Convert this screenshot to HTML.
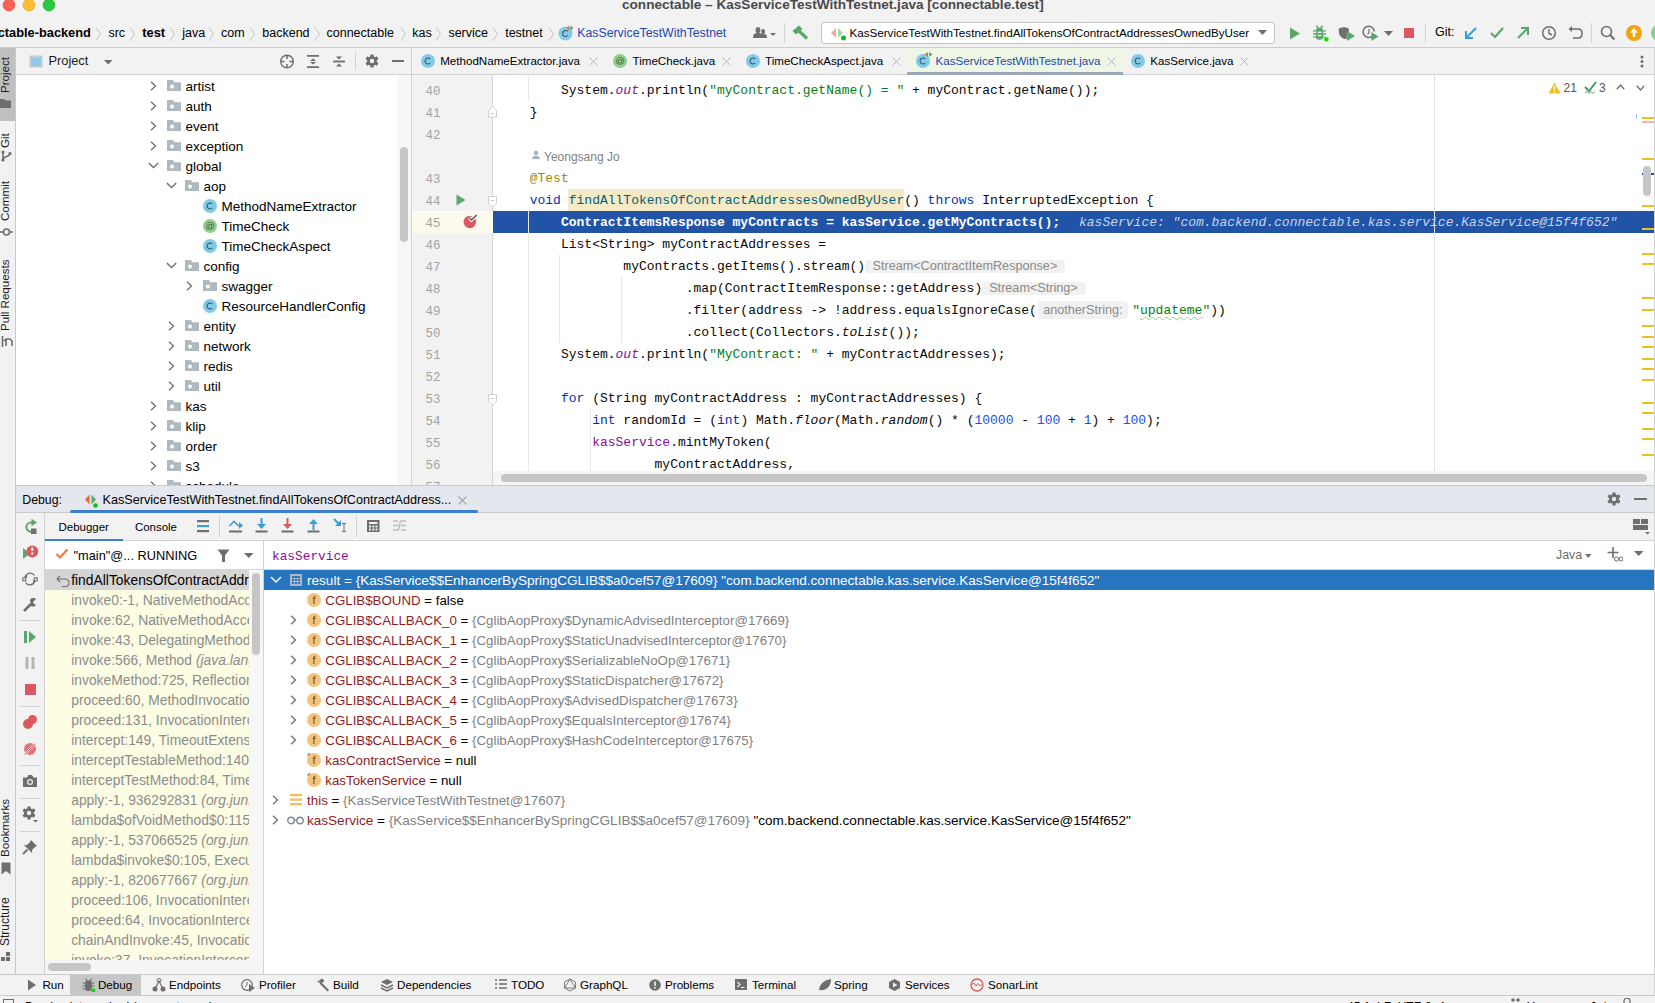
<!DOCTYPE html>
<html><head><meta charset="utf-8"><title>IDE</title><style>
html,body{margin:0;padding:0;}
body{width:1655px;height:1003px;overflow:hidden;position:relative;background:#f2f2f2;font-family:'Liberation Sans',sans-serif;}
.a{position:absolute;}
.t{white-space:pre;}
.hint{font-family:'Liberation Sans',sans-serif;font-size:11.5px;color:#8a8a8a;background:#ececec;border-radius:3px;padding:1px 3px 2px 3px;margin-left:6px;margin-right:3px;position:relative;top:-1px;}
</style></head><body>
<div class="a" style="left:0px;top:0px;width:1655px;height:47px;background:#f2f2f2;"></div>
<svg class="a" style="left:2px;top:-2px;" width="14" height="14" viewBox="0 0 14 14"><circle cx="7" cy="7" r="6" fill="#fe5f57" stroke="#e0443e" stroke-width="0.6"/></svg>
<svg class="a" style="left:22px;top:-2px;" width="14" height="14" viewBox="0 0 14 14"><circle cx="7" cy="7" r="6" fill="#febc2e" stroke="#dea123" stroke-width="0.6"/></svg>
<svg class="a" style="left:42px;top:-2px;" width="14" height="14" viewBox="0 0 14 14"><circle cx="7" cy="7" r="6" fill="#28c840" stroke="#1aab29" stroke-width="0.6"/></svg>
<div class="a t" style="left:622px;top:-2.06px;font-family:'Liberation Sans',sans-serif;font-size:13.6px;line-height:13.6px;color:#4a4a4a;font-weight:bold;">connectable – KasServiceTestWithTestnet.java [connectable.test]</div>
<div class="a t" style="left:-2.3px;top:27.02px;font-family:'Liberation Sans',sans-serif;font-size:12.8px;line-height:12.8px;color:#000;font-weight:bold;">ctable-backend</div>
<div class="a t" style="left:108.4px;top:27.27px;font-family:'Liberation Sans',sans-serif;font-size:12.5px;line-height:12.5px;color:#000;">src</div>
<div class="a t" style="left:142.3px;top:27.02px;font-family:'Liberation Sans',sans-serif;font-size:12.8px;line-height:12.8px;color:#000;font-weight:bold;">test</div>
<div class="a t" style="left:182.2px;top:27.27px;font-family:'Liberation Sans',sans-serif;font-size:12.5px;line-height:12.5px;color:#000;">java</div>
<div class="a t" style="left:221px;top:27.27px;font-family:'Liberation Sans',sans-serif;font-size:12.5px;line-height:12.5px;color:#000;">com</div>
<div class="a t" style="left:262.3px;top:27.27px;font-family:'Liberation Sans',sans-serif;font-size:12.5px;line-height:12.5px;color:#000;">backend</div>
<div class="a t" style="left:326.5px;top:27.27px;font-family:'Liberation Sans',sans-serif;font-size:12.5px;line-height:12.5px;color:#000;">connectable</div>
<div class="a t" style="left:412.2px;top:27.27px;font-family:'Liberation Sans',sans-serif;font-size:12.5px;line-height:12.5px;color:#000;">kas</div>
<div class="a t" style="left:448.4px;top:27.27px;font-family:'Liberation Sans',sans-serif;font-size:12.5px;line-height:12.5px;color:#000;">service</div>
<div class="a t" style="left:505.2px;top:27.27px;font-family:'Liberation Sans',sans-serif;font-size:12.5px;line-height:12.5px;color:#000;">testnet</div>
<svg class="a" style="left:94.6px;top:27px;" width="7" height="14" viewBox="0 0 7 14"><path d="M1 0.5 L5.5 7 L1 13.5" fill="none" stroke="#c4c4c4" stroke-width="1"/></svg>
<svg class="a" style="left:128.7px;top:27px;" width="7" height="14" viewBox="0 0 7 14"><path d="M1 0.5 L5.5 7 L1 13.5" fill="none" stroke="#c4c4c4" stroke-width="1"/></svg>
<svg class="a" style="left:169px;top:27px;" width="7" height="14" viewBox="0 0 7 14"><path d="M1 0.5 L5.5 7 L1 13.5" fill="none" stroke="#c4c4c4" stroke-width="1"/></svg>
<svg class="a" style="left:208px;top:27px;" width="7" height="14" viewBox="0 0 7 14"><path d="M1 0.5 L5.5 7 L1 13.5" fill="none" stroke="#c4c4c4" stroke-width="1"/></svg>
<svg class="a" style="left:248.7px;top:27px;" width="7" height="14" viewBox="0 0 7 14"><path d="M1 0.5 L5.5 7 L1 13.5" fill="none" stroke="#c4c4c4" stroke-width="1"/></svg>
<svg class="a" style="left:313.5px;top:27px;" width="7" height="14" viewBox="0 0 7 14"><path d="M1 0.5 L5.5 7 L1 13.5" fill="none" stroke="#c4c4c4" stroke-width="1"/></svg>
<svg class="a" style="left:399.5px;top:27px;" width="7" height="14" viewBox="0 0 7 14"><path d="M1 0.5 L5.5 7 L1 13.5" fill="none" stroke="#c4c4c4" stroke-width="1"/></svg>
<svg class="a" style="left:434.7px;top:27px;" width="7" height="14" viewBox="0 0 7 14"><path d="M1 0.5 L5.5 7 L1 13.5" fill="none" stroke="#c4c4c4" stroke-width="1"/></svg>
<svg class="a" style="left:492.4px;top:27px;" width="7" height="14" viewBox="0 0 7 14"><path d="M1 0.5 L5.5 7 L1 13.5" fill="none" stroke="#c4c4c4" stroke-width="1"/></svg>
<svg class="a" style="left:548px;top:27px;" width="7" height="14" viewBox="0 0 7 14"><path d="M1 0.5 L5.5 7 L1 13.5" fill="none" stroke="#c4c4c4" stroke-width="1"/></svg>
<svg class="a" style="left:558px;top:25px;" width="16" height="16" viewBox="0 0 16 16"><circle cx="7.5" cy="8.5" r="7" fill="#82cbe8"/><path d="M9.8 6.5 A3 3 0 1 0 9.8 10.5" fill="none" stroke="#36556a" stroke-width="1.1"/><path d="M11.5 0.5 L8.5 3 L11.5 5.5 Z" fill="#ed6a2c"/><path d="M12.5 0.5 L15.5 3 L12.5 5.5 Z" fill="#59a869"/></svg>
<div class="a t" style="left:577.3px;top:26.55px;font-family:'Liberation Sans',sans-serif;font-size:12.3px;line-height:12.3px;color:#1d47ae;">KasServiceTestWithTestnet</div>
<svg class="a" style="left:750px;top:25px;" width="28" height="16" viewBox="0 0 28 16"><path d="M3 13 C3 9 5 8 7 8 C5 7 5 2 8 2 C11 2 11 7 9 8 C11 8 13 9 13 13 Z" fill="#6e6e6e"/><path d="M9 13 C9 10 10 9 12 9 C11 8 10.5 4 13 4 C15.5 4 15.5 8 14 9 C16 9 17 10 17 13 Z" fill="#6e6e6e"/><path d="M20 8 L26 8 L23 11 Z" fill="#6e6e6e"/></svg>
<div class="a" style="left:784px;top:23px;width:1px;height:20px;background:#d1d1d1;"></div>
<svg class="a" style="left:792px;top:25px;" width="17" height="15" viewBox="0 0 17 15"><path d="M0.5 6 L7 0.5 L10.5 4 L4 9.5 Z" fill="#59a869"/><path d="M6.5 5.5 L15 13.5" stroke="#59a869" stroke-width="3.2"/></svg>
<div class="a" style="left:821px;top:22px;width:454px;height:22px;background:#fff;border:1px solid #c4c4c4;border-radius:3px;box-sizing:border-box;"></div>
<svg class="a" style="left:830px;top:26px;" width="18" height="16" viewBox="0 0 18 16"><path d="M6 2 L1 7 L6 12 Z" fill="#f4a7a0"/><path d="M8 2 L13 7 L8 12 Z" fill="#a8d6a8"/><circle cx="13.5" cy="12" r="2.5" fill="#20b020"/></svg>
<div class="a t" style="left:849.4px;top:27.09px;font-family:'Liberation Sans',sans-serif;font-size:11.66px;line-height:11.66px;color:#000;">KasServiceTestWithTestnet.findAllTokensOfContractAddressesOwnedByUser</div>
<svg class="a" style="left:1258px;top:30px;" width="10" height="6" viewBox="0 0 10 6"><path d="M0 0 L9 0 L4.5 5 Z" fill="#6e6e6e"/></svg>
<svg class="a" style="left:1289px;top:27px;" width="12" height="13" viewBox="0 0 12 13"><path d="M1 0.5 L11 6.5 L1 12.5 Z" fill="#59a869"/></svg>
<svg class="a" style="left:1312px;top:25px;" width="18" height="17" viewBox="0 0 18 17"><path d="M4.5 0.8 L6.2 3.2 M10.5 0.8 L8.8 3.2" stroke="#59a869" stroke-width="1.5"/><rect x="3.8" y="2.8" width="7.4" height="12" rx="3.3" fill="#59a869"/><rect x="5.6" y="6.6" width="3.8" height="1.4" fill="#f2f2f2"/><rect x="5.6" y="9.8" width="3.8" height="1.4" fill="#f2f2f2"/><path d="M1 5.8 L3.8 5.8 M1 9 L3.8 9 M1 12.2 L3.8 12.2 M11.2 5.8 L14 5.8 M11.2 9 L14 9 M11.2 12.2 L14 12.2" stroke="#59a869" stroke-width="1.3"/><circle cx="14.4" cy="14.3" r="2.5" fill="#00dd00" stroke="#f2f2f2" stroke-width="0.6"/></svg>
<svg class="a" style="left:1338px;top:25px;" width="18" height="17" viewBox="0 0 18 17"><path d="M0.8 3.5 C3 2.5 5 2 7 2.2 C8.5 2.3 9.8 2.8 10.8 3.5 L10.8 7 L8.8 8.5 L8.8 13 C8.2 13.5 7.5 14 6.8 14.2 C3.5 13 1 10.5 0.8 7 Z" fill="#6e6e6e"/><path d="M8.8 6 L17 11 L8.8 16 Z" fill="#59a869"/></svg>
<svg class="a" style="left:1362px;top:25px;" width="18" height="17" viewBox="0 0 18 17"><path d="M10.5 11 A5.6 5.6 0 1 1 12.3 6.5" fill="none" stroke="#6e6e6e" stroke-width="1.5"/><path d="M7 3.8 L7 7.5 L5.5 9.5" stroke="#6e6e6e" stroke-width="1.2" fill="none"/><path d="M9.3 7 L16.5 11.5 L9.3 16 Z" fill="#59a869"/></svg>
<svg class="a" style="left:1384px;top:31px;" width="10" height="6" viewBox="0 0 10 6"><path d="M0 0 L9 0 L4.5 5 Z" fill="#6e6e6e"/></svg>
<div class="a" style="left:1404px;top:28px;width:10px;height:10px;background:#db5860;"></div>
<div class="a" style="left:1425px;top:23px;width:1px;height:20px;background:#d1d1d1;"></div>
<div class="a t" style="left:1435px;top:26.38px;font-family:'Liberation Sans',sans-serif;font-size:12.5px;line-height:12.5px;color:#000;">Git:</div>
<svg class="a" style="left:1463px;top:25px;" width="16" height="16" viewBox="0 0 16 16"><path d="M13 3 L4 12 M3 6 L3 13 L10 13" stroke="#389fd6" stroke-width="2" fill="none"/></svg>
<svg class="a" style="left:1489px;top:25px;" width="16" height="16" viewBox="0 0 16 16"><path d="M2 8 L6 12 L14 3" stroke="#59a869" stroke-width="2.2" fill="none"/></svg>
<svg class="a" style="left:1515px;top:25px;" width="16" height="16" viewBox="0 0 16 16"><path d="M3 13 L12 4 M6 3 L13 3 L13 10" stroke="#59a869" stroke-width="2" fill="none"/></svg>
<svg class="a" style="left:1541px;top:25px;" width="16" height="16" viewBox="0 0 16 16"><circle cx="8" cy="8" r="6.3" fill="none" stroke="#6e6e6e" stroke-width="1.5"/><path d="M8 4 L8 8.5 L11 10" stroke="#6e6e6e" stroke-width="1.4" fill="none"/></svg>
<svg class="a" style="left:1567px;top:25px;" width="16" height="16" viewBox="0 0 16 16"><path d="M4 4 L11 4 C14 4 15 6 15 8.5 C15 11 13.5 13 11 13 L6 13" stroke="#6e6e6e" stroke-width="1.5" fill="none"/><path d="M1.5 4 L5 1 L5 7 Z" fill="#6e6e6e"/></svg>
<div class="a" style="left:1591px;top:23px;width:1px;height:20px;background:#d1d1d1;"></div>
<svg class="a" style="left:1600px;top:25px;" width="16" height="16" viewBox="0 0 16 16"><circle cx="6.5" cy="6.5" r="5" fill="none" stroke="#6e6e6e" stroke-width="1.6"/><path d="M10 10 L14.5 14.5" stroke="#6e6e6e" stroke-width="2"/></svg>
<svg class="a" style="left:1625px;top:24px;" width="18" height="18" viewBox="0 0 18 18"><circle cx="9" cy="9" r="8" fill="#f0a30a"/><path d="M9 4 L13 8.5 L10.3 8.5 L10.3 13 L7.7 13 L7.7 8.5 L5 8.5 Z" fill="#fff"/></svg>
<svg class="a" style="left:1650px;top:24px;" width="10" height="18" viewBox="0 0 10 18"><circle cx="9" cy="9" r="8" fill="#7ed38f"/></svg>
<div class="a" style="left:0px;top:47px;width:1655px;height:1px;background:#cdcdcd;"></div>
<div class="a" style="left:0px;top:48px;width:15px;height:955px;background:#f2f2f2;"></div>
<div class="a" style="left:0px;top:48px;width:15px;height:73px;background:#c0c0c0;"></div>
<div class="a" style="left:15px;top:48px;width:1px;height:926px;background:#c9c9c9;"></div>
<div class="a t" style="left:-1.0px;top:93px;font-family:'Liberation Sans';font-size:11.6px;line-height:11.6px;color:#1c1c1c;transform-origin:0 0;transform:rotate(-90deg);">Project</div>
<svg class="a" style="left:0px;top:99px;" width="12" height="10" viewBox="0 0 12 10"><path d="M0 0 L4 0 L5.5 1.5 L11 1.5 L11 9 L0 9 Z" fill="#6e6e6e"/></svg>
<div class="a t" style="left:-1.0px;top:148px;font-family:'Liberation Sans';font-size:11.6px;line-height:11.6px;color:#1c1c1c;transform-origin:0 0;transform:rotate(-90deg);">Git</div>
<svg class="a" style="left:1px;top:150px;" width="11" height="12" viewBox="0 0 11 12"><circle cx="2" cy="2" r="1.6" fill="#6e6e6e"/><circle cx="9" cy="3.5" r="1.6" fill="#6e6e6e"/><circle cx="2" cy="10" r="1.6" fill="#6e6e6e"/><path d="M2 2 L2 10 M9 3.5 C9 7 3 6 2 9" stroke="#6e6e6e" stroke-width="1.5" fill="none"/></svg>
<div class="a t" style="left:-1.0px;top:221px;font-family:'Liberation Sans';font-size:11.6px;line-height:11.6px;color:#1c1c1c;transform-origin:0 0;transform:rotate(-90deg);">Commit</div>
<svg class="a" style="left:0px;top:227px;" width="13" height="10" viewBox="0 0 13 10"><circle cx="6.5" cy="5" r="3" fill="none" stroke="#6e6e6e" stroke-width="1.6"/><path d="M0 5 L3.5 5 M9.5 5 L13 5" stroke="#6e6e6e" stroke-width="1.6"/></svg>
<div class="a t" style="left:-1.0px;top:330.5px;font-family:'Liberation Sans';font-size:11.6px;line-height:11.6px;color:#1c1c1c;transform-origin:0 0;transform:rotate(-90deg);">Pull Requests</div>
<svg class="a" style="left:1px;top:336px;" width="12" height="11" viewBox="0 0 12 11"><path d="M1.5 0 L1.5 11 M5 10 L5 3 M5 3 L3 5 M5 3 L9 3 L11 5 L11 10" stroke="#6e6e6e" stroke-width="1.6" fill="none"/></svg>
<div class="a t" style="left:-1.0px;top:857px;font-family:'Liberation Sans';font-size:11.6px;line-height:11.6px;color:#1c1c1c;transform-origin:0 0;transform:rotate(-90deg);">Bookmarks</div>
<svg class="a" style="left:1px;top:862px;" width="10" height="13" viewBox="0 0 10 13"><path d="M0.5 0.5 L9.5 0.5 L9.5 12.5 L5 9 L0.5 12.5 Z" fill="#6e6e6e"/></svg>
<div class="a t" style="left:-1.0px;top:945.5px;font-family:'Liberation Sans';font-size:12px;line-height:12px;color:#1c1c1c;transform-origin:0 0;transform:rotate(-90deg);">Structure</div>
<svg class="a" style="left:1px;top:952px;" width="10" height="10" viewBox="0 0 10 10"><rect x="5" y="0" width="4" height="4" fill="#6e6e6e"/><rect x="0" y="5" width="4" height="4" fill="#6e6e6e"/><rect x="5" y="5" width="4" height="4" fill="#6e6e6e"/></svg>
<div class="a" style="left:16px;top:48px;width:395px;height:26px;background:#f2f2f2;"></div>
<div class="a" style="left:16px;top:74px;width:395px;height:1px;background:#d1d1d1;"></div>
<div class="a" style="left:16px;top:75px;width:395px;height:410px;background:#ffffff;"></div>
<div class="a" style="left:397px;top:75px;width:14px;height:410px;background:#f7f7f7;"></div>
<div class="a" style="left:411px;top:48px;width:1px;height:438px;background:#d1d1d1;"></div>
<svg class="a" style="left:29px;top:55px;" width="14" height="13" viewBox="0 0 14 13"><rect x="0.5" y="0.5" width="13" height="12" fill="#9aa7b0" opacity="0.5"/><rect x="2" y="3" width="10" height="8" fill="#8ecbe8"/></svg>
<div class="a t" style="left:48.5px;top:55.12px;font-family:'Liberation Sans',sans-serif;font-size:12.8px;line-height:12.8px;color:#1a1a1a;">Project</div>
<svg class="a" style="left:104px;top:60px;" width="9" height="5" viewBox="0 0 9 5"><path d="M0 0 L8.5 0 L4.25 4.5 Z" fill="#6e6e6e"/></svg>
<svg class="a" style="left:280px;top:54px;" width="15" height="15" viewBox="0 0 15 15"><circle cx="7" cy="7.5" r="6.3" fill="none" stroke="#6e6e6e" stroke-width="1.4"/><path d="M7 1.5 L7 5 M7 10 L7 13.5 M1 7.5 L4.5 7.5 M9.5 7.5 L13 7.5" stroke="#6e6e6e" stroke-width="1.5"/></svg>
<svg class="a" style="left:306px;top:54px;" width="14" height="15" viewBox="0 0 14 15"><path d="M1 1.8 L13 1.8 M1 13.2 L13 13.2" stroke="#6e6e6e" stroke-width="1.8"/><path d="M7 4.5 L10 7 L4 7 Z M7 10.5 L10 8 L4 8 Z" fill="#6e6e6e"/></svg>
<svg class="a" style="left:332px;top:54px;" width="14" height="15" viewBox="0 0 14 15"><path d="M1 7.5 L13 7.5" stroke="#6e6e6e" stroke-width="1.8"/><path d="M7 5.5 L10 2.5 L4 2.5 Z M7 9.5 L10 12.5 L4 12.5 Z" fill="#6e6e6e"/></svg>
<div class="a" style="left:355px;top:52px;width:1px;height:18px;background:#d1d1d1;"></div>
<svg class="a" style="left:365px;top:54px;" width="14" height="14" viewBox="0 0 14 14"><path d="M5.43 2.25 L5.41 0.39 L8.59 0.39 L8.57 2.25 L10.33 3.27 L11.93 2.32 L13.52 5.07 L11.90 5.99 L11.90 8.01 L13.52 8.93 L11.93 11.68 L10.33 10.73 L8.57 11.75 L8.59 13.61 L5.41 13.61 L5.43 11.75 L3.67 10.73 L2.07 11.68 L0.48 8.93 L2.10 8.01 L2.10 5.99 L0.48 5.07 L2.07 2.32 L3.67 3.27 Z" fill="#6e6e6e"/><circle cx="7" cy="7" r="2.2" fill="#f2f2f2"/></svg>
<div class="a" style="left:392px;top:60px;width:12px;height:2px;background:#6e6e6e;"></div>
<div class="a" style="left:16px;top:75px;width:381px;height:410px;overflow:hidden">
<svg class="a" style="left:134px;top:6px;" width="7" height="10" viewBox="0 0 7 10"><path d="M1 0.8 L5.5 5 L1 9.2" fill="none" stroke="#6e6e6e" stroke-width="1.3"/></svg>
<svg class="a" style="left:151px;top:4px;" width="14" height="13" viewBox="0 0 14 13"><path d="M0 1 L6.2 1 L7.2 3.2 L14 3.2 L14 12 L0 12 Z" fill="#aeb9c0"/><circle cx="5" cy="7.4" r="2" fill="#fff"/></svg>
<div class="a t" style="left:169.5px;top:5.03px;font-family:'Liberation Sans',sans-serif;font-size:13.5px;line-height:13.5px;color:#000;">artist</div>
<svg class="a" style="left:134px;top:26px;" width="7" height="10" viewBox="0 0 7 10"><path d="M1 0.8 L5.5 5 L1 9.2" fill="none" stroke="#6e6e6e" stroke-width="1.3"/></svg>
<svg class="a" style="left:151px;top:24px;" width="14" height="13" viewBox="0 0 14 13"><path d="M0 1 L6.2 1 L7.2 3.2 L14 3.2 L14 12 L0 12 Z" fill="#aeb9c0"/><circle cx="5" cy="7.4" r="2" fill="#fff"/></svg>
<div class="a t" style="left:169.5px;top:25.02px;font-family:'Liberation Sans',sans-serif;font-size:13.5px;line-height:13.5px;color:#000;">auth</div>
<svg class="a" style="left:134px;top:46px;" width="7" height="10" viewBox="0 0 7 10"><path d="M1 0.8 L5.5 5 L1 9.2" fill="none" stroke="#6e6e6e" stroke-width="1.3"/></svg>
<svg class="a" style="left:151px;top:44px;" width="14" height="13" viewBox="0 0 14 13"><path d="M0 1 L6.2 1 L7.2 3.2 L14 3.2 L14 12 L0 12 Z" fill="#aeb9c0"/><circle cx="5" cy="7.4" r="2" fill="#fff"/></svg>
<div class="a t" style="left:169.5px;top:45.02px;font-family:'Liberation Sans',sans-serif;font-size:13.5px;line-height:13.5px;color:#000;">event</div>
<svg class="a" style="left:134px;top:66px;" width="7" height="10" viewBox="0 0 7 10"><path d="M1 0.8 L5.5 5 L1 9.2" fill="none" stroke="#6e6e6e" stroke-width="1.3"/></svg>
<svg class="a" style="left:151px;top:64px;" width="14" height="13" viewBox="0 0 14 13"><path d="M0 1 L6.2 1 L7.2 3.2 L14 3.2 L14 12 L0 12 Z" fill="#aeb9c0"/><circle cx="5" cy="7.4" r="2" fill="#fff"/></svg>
<div class="a t" style="left:169.5px;top:65.03px;font-family:'Liberation Sans',sans-serif;font-size:13.5px;line-height:13.5px;color:#000;">exception</div>
<svg class="a" style="left:132px;top:87px;" width="11" height="7" viewBox="0 0 11 7"><path d="M0.8 1 L5.5 5.5 L10.2 1" fill="none" stroke="#6e6e6e" stroke-width="1.3"/></svg>
<svg class="a" style="left:151px;top:84px;" width="14" height="13" viewBox="0 0 14 13"><path d="M0 1 L6.2 1 L7.2 3.2 L14 3.2 L14 12 L0 12 Z" fill="#aeb9c0"/><circle cx="5" cy="7.4" r="2" fill="#fff"/></svg>
<div class="a t" style="left:169.5px;top:85.03px;font-family:'Liberation Sans',sans-serif;font-size:13.5px;line-height:13.5px;color:#000;">global</div>
<svg class="a" style="left:150px;top:107px;" width="11" height="7" viewBox="0 0 11 7"><path d="M0.8 1 L5.5 5.5 L10.2 1" fill="none" stroke="#6e6e6e" stroke-width="1.3"/></svg>
<svg class="a" style="left:169px;top:104px;" width="14" height="13" viewBox="0 0 14 13"><path d="M0 1 L6.2 1 L7.2 3.2 L14 3.2 L14 12 L0 12 Z" fill="#aeb9c0"/><circle cx="5" cy="7.4" r="2" fill="#fff"/></svg>
<div class="a t" style="left:187.5px;top:105.03px;font-family:'Liberation Sans',sans-serif;font-size:13.5px;line-height:13.5px;color:#000;">aop</div>
<svg class="a" style="left:187px;top:124px;" width="14" height="14" viewBox="0 0 14 14"><circle cx="7" cy="7" r="7" fill="#82cbe8"/><path d="M9.3 5 A3 3 0 1 0 9.3 9" fill="none" stroke="#36556a" stroke-width="1.1"/></svg>
<div class="a t" style="left:205.5px;top:125.03px;font-family:'Liberation Sans',sans-serif;font-size:13.5px;line-height:13.5px;color:#000;">MethodNameExtractor</div>
<svg class="a" style="left:187px;top:144px;" width="14" height="14" viewBox="0 0 14 14"><circle cx="7" cy="7" r="7" fill="#8fcf8c"/><text x="7" y="10.3" font-family="Liberation Sans" font-size="9" fill="#3b5c3a" text-anchor="middle">@</text></svg>
<div class="a t" style="left:205.5px;top:145.03px;font-family:'Liberation Sans',sans-serif;font-size:13.5px;line-height:13.5px;color:#000;">TimeCheck</div>
<svg class="a" style="left:187px;top:164px;" width="14" height="14" viewBox="0 0 14 14"><circle cx="7" cy="7" r="7" fill="#82cbe8"/><path d="M9.3 5 A3 3 0 1 0 9.3 9" fill="none" stroke="#36556a" stroke-width="1.1"/></svg>
<div class="a t" style="left:205.5px;top:165.03px;font-family:'Liberation Sans',sans-serif;font-size:13.5px;line-height:13.5px;color:#000;">TimeCheckAspect</div>
<svg class="a" style="left:150px;top:187px;" width="11" height="7" viewBox="0 0 11 7"><path d="M0.8 1 L5.5 5.5 L10.2 1" fill="none" stroke="#6e6e6e" stroke-width="1.3"/></svg>
<svg class="a" style="left:169px;top:184px;" width="14" height="13" viewBox="0 0 14 13"><path d="M0 1 L6.2 1 L7.2 3.2 L14 3.2 L14 12 L0 12 Z" fill="#aeb9c0"/><circle cx="5" cy="7.4" r="2" fill="#fff"/></svg>
<div class="a t" style="left:187.5px;top:185.03px;font-family:'Liberation Sans',sans-serif;font-size:13.5px;line-height:13.5px;color:#000;">config</div>
<svg class="a" style="left:170px;top:206px;" width="7" height="10" viewBox="0 0 7 10"><path d="M1 0.8 L5.5 5 L1 9.2" fill="none" stroke="#6e6e6e" stroke-width="1.3"/></svg>
<svg class="a" style="left:187px;top:204px;" width="14" height="13" viewBox="0 0 14 13"><path d="M0 1 L6.2 1 L7.2 3.2 L14 3.2 L14 12 L0 12 Z" fill="#aeb9c0"/><circle cx="5" cy="7.4" r="2" fill="#fff"/></svg>
<div class="a t" style="left:205.5px;top:205.03px;font-family:'Liberation Sans',sans-serif;font-size:13.5px;line-height:13.5px;color:#000;">swagger</div>
<svg class="a" style="left:187px;top:224px;" width="14" height="14" viewBox="0 0 14 14"><circle cx="7" cy="7" r="7" fill="#82cbe8"/><path d="M9.3 5 A3 3 0 1 0 9.3 9" fill="none" stroke="#36556a" stroke-width="1.1"/></svg>
<div class="a t" style="left:205.5px;top:225.03px;font-family:'Liberation Sans',sans-serif;font-size:13.5px;line-height:13.5px;color:#000;">ResourceHandlerConfig</div>
<svg class="a" style="left:152px;top:246px;" width="7" height="10" viewBox="0 0 7 10"><path d="M1 0.8 L5.5 5 L1 9.2" fill="none" stroke="#6e6e6e" stroke-width="1.3"/></svg>
<svg class="a" style="left:169px;top:244px;" width="14" height="13" viewBox="0 0 14 13"><path d="M0 1 L6.2 1 L7.2 3.2 L14 3.2 L14 12 L0 12 Z" fill="#aeb9c0"/><circle cx="5" cy="7.4" r="2" fill="#fff"/></svg>
<div class="a t" style="left:187.5px;top:245.03px;font-family:'Liberation Sans',sans-serif;font-size:13.5px;line-height:13.5px;color:#000;">entity</div>
<svg class="a" style="left:152px;top:266px;" width="7" height="10" viewBox="0 0 7 10"><path d="M1 0.8 L5.5 5 L1 9.2" fill="none" stroke="#6e6e6e" stroke-width="1.3"/></svg>
<svg class="a" style="left:169px;top:264px;" width="14" height="13" viewBox="0 0 14 13"><path d="M0 1 L6.2 1 L7.2 3.2 L14 3.2 L14 12 L0 12 Z" fill="#aeb9c0"/><circle cx="5" cy="7.4" r="2" fill="#fff"/></svg>
<div class="a t" style="left:187.5px;top:265.02px;font-family:'Liberation Sans',sans-serif;font-size:13.5px;line-height:13.5px;color:#000;">network</div>
<svg class="a" style="left:152px;top:286px;" width="7" height="10" viewBox="0 0 7 10"><path d="M1 0.8 L5.5 5 L1 9.2" fill="none" stroke="#6e6e6e" stroke-width="1.3"/></svg>
<svg class="a" style="left:169px;top:284px;" width="14" height="13" viewBox="0 0 14 13"><path d="M0 1 L6.2 1 L7.2 3.2 L14 3.2 L14 12 L0 12 Z" fill="#aeb9c0"/><circle cx="5" cy="7.4" r="2" fill="#fff"/></svg>
<div class="a t" style="left:187.5px;top:285.02px;font-family:'Liberation Sans',sans-serif;font-size:13.5px;line-height:13.5px;color:#000;">redis</div>
<svg class="a" style="left:152px;top:306px;" width="7" height="10" viewBox="0 0 7 10"><path d="M1 0.8 L5.5 5 L1 9.2" fill="none" stroke="#6e6e6e" stroke-width="1.3"/></svg>
<svg class="a" style="left:169px;top:304px;" width="14" height="13" viewBox="0 0 14 13"><path d="M0 1 L6.2 1 L7.2 3.2 L14 3.2 L14 12 L0 12 Z" fill="#aeb9c0"/><circle cx="5" cy="7.4" r="2" fill="#fff"/></svg>
<div class="a t" style="left:187.5px;top:305.02px;font-family:'Liberation Sans',sans-serif;font-size:13.5px;line-height:13.5px;color:#000;">util</div>
<svg class="a" style="left:134px;top:326px;" width="7" height="10" viewBox="0 0 7 10"><path d="M1 0.8 L5.5 5 L1 9.2" fill="none" stroke="#6e6e6e" stroke-width="1.3"/></svg>
<svg class="a" style="left:151px;top:324px;" width="14" height="13" viewBox="0 0 14 13"><path d="M0 1 L6.2 1 L7.2 3.2 L14 3.2 L14 12 L0 12 Z" fill="#aeb9c0"/><circle cx="5" cy="7.4" r="2" fill="#fff"/></svg>
<div class="a t" style="left:169.5px;top:325.02px;font-family:'Liberation Sans',sans-serif;font-size:13.5px;line-height:13.5px;color:#000;">kas</div>
<svg class="a" style="left:134px;top:346px;" width="7" height="10" viewBox="0 0 7 10"><path d="M1 0.8 L5.5 5 L1 9.2" fill="none" stroke="#6e6e6e" stroke-width="1.3"/></svg>
<svg class="a" style="left:151px;top:344px;" width="14" height="13" viewBox="0 0 14 13"><path d="M0 1 L6.2 1 L7.2 3.2 L14 3.2 L14 12 L0 12 Z" fill="#aeb9c0"/><circle cx="5" cy="7.4" r="2" fill="#fff"/></svg>
<div class="a t" style="left:169.5px;top:345.02px;font-family:'Liberation Sans',sans-serif;font-size:13.5px;line-height:13.5px;color:#000;">klip</div>
<svg class="a" style="left:134px;top:366px;" width="7" height="10" viewBox="0 0 7 10"><path d="M1 0.8 L5.5 5 L1 9.2" fill="none" stroke="#6e6e6e" stroke-width="1.3"/></svg>
<svg class="a" style="left:151px;top:364px;" width="14" height="13" viewBox="0 0 14 13"><path d="M0 1 L6.2 1 L7.2 3.2 L14 3.2 L14 12 L0 12 Z" fill="#aeb9c0"/><circle cx="5" cy="7.4" r="2" fill="#fff"/></svg>
<div class="a t" style="left:169.5px;top:365.02px;font-family:'Liberation Sans',sans-serif;font-size:13.5px;line-height:13.5px;color:#000;">order</div>
<svg class="a" style="left:134px;top:386px;" width="7" height="10" viewBox="0 0 7 10"><path d="M1 0.8 L5.5 5 L1 9.2" fill="none" stroke="#6e6e6e" stroke-width="1.3"/></svg>
<svg class="a" style="left:151px;top:384px;" width="14" height="13" viewBox="0 0 14 13"><path d="M0 1 L6.2 1 L7.2 3.2 L14 3.2 L14 12 L0 12 Z" fill="#aeb9c0"/><circle cx="5" cy="7.4" r="2" fill="#fff"/></svg>
<div class="a t" style="left:169.5px;top:385.02px;font-family:'Liberation Sans',sans-serif;font-size:13.5px;line-height:13.5px;color:#000;">s3</div>
<svg class="a" style="left:134px;top:406px;" width="7" height="10" viewBox="0 0 7 10"><path d="M1 0.8 L5.5 5 L1 9.2" fill="none" stroke="#6e6e6e" stroke-width="1.3"/></svg>
<svg class="a" style="left:151px;top:404px;" width="14" height="13" viewBox="0 0 14 13"><path d="M0 1 L6.2 1 L7.2 3.2 L14 3.2 L14 12 L0 12 Z" fill="#aeb9c0"/><circle cx="5" cy="7.4" r="2" fill="#fff"/></svg>
<div class="a t" style="left:169.5px;top:405.02px;font-family:'Liberation Sans',sans-serif;font-size:13.5px;line-height:13.5px;color:#000;">schedule</div>
</div>
<div class="a" style="left:400px;top:147px;width:8px;height:95px;background:#c6c6c6;border-radius:4px;"></div>
<div class="a" style="left:412px;top:48px;width:1243px;height:26px;background:#f2f2f2;"></div>
<div class="a" style="left:412px;top:74px;width:1243px;height:1px;background:#d1d1d1;"></div>
<div class="a" style="left:907px;top:48px;width:216px;height:26px;background:#eef7e6;"></div>
<div class="a" style="left:907px;top:72px;width:216px;height:3px;background:#9aa7b9;"></div>
<svg class="a" style="left:421px;top:54px;" width="14" height="14" viewBox="0 0 14 14"><circle cx="7" cy="7" r="7" fill="#82cbe8"/><path d="M9.3 5 A3 3 0 1 0 9.3 9" fill="none" stroke="#36556a" stroke-width="1.1"/></svg>
<div class="a t" style="left:440.2px;top:54.94px;font-family:'Liberation Sans',sans-serif;font-size:11.6px;line-height:11.6px;color:#000;">MethodNameExtractor.java</div>
<svg class="a" style="left:589px;top:57px;" width="9" height="9" viewBox="0 0 9 9"><path d="M0.5 0.5 L8.5 8.5 M8.5 0.5 L0.5 8.5" stroke="#b4b4b4" stroke-width="1"/></svg>
<svg class="a" style="left:613.2px;top:54px;" width="14" height="14" viewBox="0 0 14 14"><circle cx="7" cy="7" r="7" fill="#8fcf8c"/><text x="7" y="10.3" font-family="Liberation Sans" font-size="9" fill="#3b5c3a" text-anchor="middle">@</text></svg>
<div class="a t" style="left:632.5px;top:54.94px;font-family:'Liberation Sans',sans-serif;font-size:11.6px;line-height:11.6px;color:#000;">TimeCheck.java</div>
<svg class="a" style="left:722px;top:57px;" width="9" height="9" viewBox="0 0 9 9"><path d="M0.5 0.5 L8.5 8.5 M8.5 0.5 L0.5 8.5" stroke="#b4b4b4" stroke-width="1"/></svg>
<svg class="a" style="left:745.6px;top:54px;" width="14" height="14" viewBox="0 0 14 14"><circle cx="7" cy="7" r="7" fill="#82cbe8"/><path d="M9.3 5 A3 3 0 1 0 9.3 9" fill="none" stroke="#36556a" stroke-width="1.1"/></svg>
<div class="a t" style="left:765px;top:54.94px;font-family:'Liberation Sans',sans-serif;font-size:11.6px;line-height:11.6px;color:#000;">TimeCheckAspect.java</div>
<svg class="a" style="left:892px;top:57px;" width="9" height="9" viewBox="0 0 9 9"><path d="M0.5 0.5 L8.5 8.5 M8.5 0.5 L0.5 8.5" stroke="#b4b4b4" stroke-width="1"/></svg>
<svg class="a" style="left:915.8px;top:54px;" width="14" height="14" viewBox="0 0 14 14"><circle cx="7" cy="7" r="7" fill="#82cbe8"/><path d="M9.3 5 A3 3 0 1 0 9.3 9" fill="none" stroke="#36556a" stroke-width="1.1"/></svg>
<svg class="a" style="left:923.8px;top:52px;" width="9" height="6" viewBox="0 0 9 6"><path d="M4 0 L0.5 2.5 L4 5 Z" fill="#ed6a2c"/><path d="M5 0 L8.5 2.5 L5 5 Z" fill="#59a869"/></svg>
<div class="a t" style="left:935.5px;top:54.94px;font-family:'Liberation Sans',sans-serif;font-size:11.6px;line-height:11.6px;color:#1d47ae;">KasServiceTestWithTestnet.java</div>
<svg class="a" style="left:1107px;top:57px;" width="9" height="9" viewBox="0 0 9 9"><path d="M0.5 0.5 L8.5 8.5 M8.5 0.5 L0.5 8.5" stroke="#b4b4b4" stroke-width="1"/></svg>
<svg class="a" style="left:1131px;top:54px;" width="14" height="14" viewBox="0 0 14 14"><circle cx="7" cy="7" r="7" fill="#82cbe8"/><path d="M9.3 5 A3 3 0 1 0 9.3 9" fill="none" stroke="#36556a" stroke-width="1.1"/></svg>
<div class="a t" style="left:1150.3px;top:54.94px;font-family:'Liberation Sans',sans-serif;font-size:11.6px;line-height:11.6px;color:#000;">KasService.java</div>
<svg class="a" style="left:1240px;top:57px;" width="9" height="9" viewBox="0 0 9 9"><path d="M0.5 0.5 L8.5 8.5 M8.5 0.5 L0.5 8.5" stroke="#b4b4b4" stroke-width="1"/></svg>
<svg class="a" style="left:1640px;top:55px;" width="4" height="13" viewBox="0 0 4 13"><circle cx="2" cy="2" r="1.5" fill="#6e6e6e"/><circle cx="2" cy="6.5" r="1.5" fill="#6e6e6e"/><circle cx="2" cy="11" r="1.5" fill="#6e6e6e"/></svg>
<div class="a" style="left:412px;top:75px;width:81px;height:410px;background:#f2f2f2;"></div>
<div class="a" style="left:493px;top:75px;width:1162px;height:410px;background:#ffffff;"></div>
<div class="a" style="left:492px;top:75px;width:1px;height:410px;background:#d5d5d5;"></div>
<div class="a" style="left:412px;top:75px;width:1243px;height:410px;overflow:hidden">
<div class="a" style="left:0px;top:136px;width:81px;height:22px;background:#fcfaed;"></div>
<div class="a" style="left:81px;top:136px;width:1162px;height:22px;background:#2154a6;"></div>
<div class="a" style="left:155.70000000000005px;top:114px;width:336.4px;height:22px;background:#f5eac6;"></div>
<div class="a" style="left:115.5px;top:0px;width:1px;height:26px;background:#e8e8e8;"></div>
<div class="a" style="left:115.5px;top:136px;width:1px;height:286px;background:#e8e8e8;"></div>
<div class="a" style="left:146.5px;top:180px;width:1px;height:88px;background:#e8e8e8;"></div>
<div class="a" style="left:177.5px;top:334px;width:1px;height:88px;background:#e8e8e8;"></div>
<div class="a" style="left:208.5px;top:202px;width:1px;height:66px;background:#e8e8e8;"></div>
<div class="a" style="left:1022px;top:0px;width:1px;height:410px;background:#e0e0e0;"></div>
<div class="a t" style="left:13.5px;top:10.98px;font-family:'Liberation Mono',monospace;font-size:12.4px;line-height:12.4px;color:#a3a3a3;">40</div>
<div class="a t" style="left:13.5px;top:32.98px;font-family:'Liberation Mono',monospace;font-size:12.4px;line-height:12.4px;color:#a3a3a3;">41</div>
<div class="a t" style="left:13.5px;top:54.98px;font-family:'Liberation Mono',monospace;font-size:12.4px;line-height:12.4px;color:#a3a3a3;">42</div>
<div class="a t" style="left:13.5px;top:98.98px;font-family:'Liberation Mono',monospace;font-size:12.4px;line-height:12.4px;color:#a3a3a3;">43</div>
<div class="a t" style="left:13.5px;top:120.98px;font-family:'Liberation Mono',monospace;font-size:12.4px;line-height:12.4px;color:#a3a3a3;">44</div>
<div class="a t" style="left:13.5px;top:142.98px;font-family:'Liberation Mono',monospace;font-size:12.4px;line-height:12.4px;color:#a3a3a3;">45</div>
<div class="a t" style="left:13.5px;top:164.98px;font-family:'Liberation Mono',monospace;font-size:12.4px;line-height:12.4px;color:#a3a3a3;">46</div>
<div class="a t" style="left:13.5px;top:186.98px;font-family:'Liberation Mono',monospace;font-size:12.4px;line-height:12.4px;color:#a3a3a3;">47</div>
<div class="a t" style="left:13.5px;top:208.98px;font-family:'Liberation Mono',monospace;font-size:12.4px;line-height:12.4px;color:#a3a3a3;">48</div>
<div class="a t" style="left:13.5px;top:230.98px;font-family:'Liberation Mono',monospace;font-size:12.4px;line-height:12.4px;color:#a3a3a3;">49</div>
<div class="a t" style="left:13.5px;top:252.98px;font-family:'Liberation Mono',monospace;font-size:12.4px;line-height:12.4px;color:#a3a3a3;">50</div>
<div class="a t" style="left:13.5px;top:274.98px;font-family:'Liberation Mono',monospace;font-size:12.4px;line-height:12.4px;color:#a3a3a3;">51</div>
<div class="a t" style="left:13.5px;top:296.98px;font-family:'Liberation Mono',monospace;font-size:12.4px;line-height:12.4px;color:#a3a3a3;">52</div>
<div class="a t" style="left:13.5px;top:318.98px;font-family:'Liberation Mono',monospace;font-size:12.4px;line-height:12.4px;color:#a3a3a3;">53</div>
<div class="a t" style="left:13.5px;top:340.98px;font-family:'Liberation Mono',monospace;font-size:12.4px;line-height:12.4px;color:#a3a3a3;">54</div>
<div class="a t" style="left:13.5px;top:362.98px;font-family:'Liberation Mono',monospace;font-size:12.4px;line-height:12.4px;color:#a3a3a3;">55</div>
<div class="a t" style="left:13.5px;top:384.98px;font-family:'Liberation Mono',monospace;font-size:12.4px;line-height:12.4px;color:#a3a3a3;">56</div>
<div class="a t" style="left:13.5px;top:406.98px;font-family:'Liberation Mono',monospace;font-size:12.4px;line-height:12.4px;color:#a3a3a3;">57</div>
<div class="a t" style="left:86.5px;top:9.32px;font-family:'Liberation Mono',monospace;font-size:13px;line-height:13px;color:#000;white-space:pre">        <span style="color:#080808;">System.</span><span style="color:#871094;font-style:italic;">out</span><span style="color:#080808;">.println(</span><span style="color:#067d17;">"myContract.getName() = "</span><span style="color:#080808;"> + myContract.getName());</span></div>
<div class="a t" style="left:86.5px;top:31.32px;font-family:'Liberation Mono',monospace;font-size:13px;line-height:13px;color:#000;white-space:pre">    <span style="color:#080808;">}</span></div>
<div class="a t" style="left:86.5px;top:97.32px;font-family:'Liberation Mono',monospace;font-size:13px;line-height:13px;color:#000;white-space:pre">    <span style="color:#9e880d;">@Test</span></div>
<div class="a t" style="left:86.5px;top:119.32px;font-family:'Liberation Mono',monospace;font-size:13px;line-height:13px;color:#000;white-space:pre">    <span style="color:#0033b3;">void </span><span style="color:#00627a;">findAllTokensOfContractAddressesOwnedByUser</span><span style="color:#080808;">() </span><span style="color:#0033b3;">throws </span><span style="color:#080808;">InterruptedException {</span></div>
<div class="a t" style="left:86.5px;top:141.32px;font-family:'Liberation Mono',monospace;font-size:13px;line-height:13px;color:#000;white-space:pre">        <span style="color:#fff;font-weight:bold">ContractItemsResponse myContracts = kasService.getMyContracts();</span></div>
<div class="a t" style="left:86.5px;top:163.32px;font-family:'Liberation Mono',monospace;font-size:13px;line-height:13px;color:#000;white-space:pre">        <span style="color:#080808;">List&lt;String&gt; myContractAddresses =</span></div>
<div class="a t" style="left:86.5px;top:185.32px;font-family:'Liberation Mono',monospace;font-size:13px;line-height:13px;color:#000;white-space:pre">                <span style="color:#080808;">myContracts.getItems().stream()</span></div>
<div class="a t" style="left:86.5px;top:207.32px;font-family:'Liberation Mono',monospace;font-size:13px;line-height:13px;color:#000;white-space:pre">                        <span style="color:#080808;">.map(ContractItemResponse::getAddress)</span></div>
<div class="a t" style="left:86.5px;top:229.32px;font-family:'Liberation Mono',monospace;font-size:13px;line-height:13px;color:#000;white-space:pre">                        <span style="color:#080808;">.filter(address -&gt; !address.equalsIgnoreCase(</span></div>
<div class="a t" style="left:86.5px;top:251.32px;font-family:'Liberation Mono',monospace;font-size:13px;line-height:13px;color:#000;white-space:pre">                        <span style="color:#080808;">.collect(Collectors.</span><span style="color:#080808;font-style:italic;">toList</span><span style="color:#080808;">());</span></div>
<div class="a t" style="left:86.5px;top:273.32px;font-family:'Liberation Mono',monospace;font-size:13px;line-height:13px;color:#000;white-space:pre">        <span style="color:#080808;">System.</span><span style="color:#871094;font-style:italic;">out</span><span style="color:#080808;">.println(</span><span style="color:#067d17;">"MyContract: "</span><span style="color:#080808;"> + myContractAddresses);</span></div>
<div class="a t" style="left:86.5px;top:317.32px;font-family:'Liberation Mono',monospace;font-size:13px;line-height:13px;color:#000;white-space:pre">        <span style="color:#0033b3;">for </span><span style="color:#080808;">(String myContractAddress : myContractAddresses) {</span></div>
<div class="a t" style="left:86.5px;top:339.32px;font-family:'Liberation Mono',monospace;font-size:13px;line-height:13px;color:#000;white-space:pre">            <span style="color:#0033b3;">int </span><span style="color:#080808;">randomId = (</span><span style="color:#0033b3;">int</span><span style="color:#080808;">) Math.</span><span style="color:#080808;font-style:italic;">floor</span><span style="color:#080808;">(Math.</span><span style="color:#080808;font-style:italic;">random</span><span style="color:#080808;">() * (</span><span style="color:#1750eb;">10000</span><span style="color:#080808;"> - </span><span style="color:#1750eb;">100</span><span style="color:#080808;"> + </span><span style="color:#1750eb;">1</span><span style="color:#080808;">) + </span><span style="color:#1750eb;">100</span><span style="color:#080808;">);</span></div>
<div class="a t" style="left:86.5px;top:361.32px;font-family:'Liberation Mono',monospace;font-size:13px;line-height:13px;color:#000;white-space:pre">            <span style="color:#871094;">kasService</span><span style="color:#080808;">.mintMyToken(</span></div>
<div class="a t" style="left:86.5px;top:383.32px;font-family:'Liberation Mono',monospace;font-size:13px;line-height:13px;color:#000;white-space:pre">                    <span style="color:#080808;">myContractAddress,</span></div>
<div class="a" style="left:453.20000000000005px;top:185px;width:199.39999999999986px;height:13px;background:#f1f1f1;border-radius:4px;"></div>
<div class="a t" style="left:460.5px;top:185.25px;font-family:'Liberation Sans',sans-serif;font-size:12.65px;line-height:12.65px;color:#8a8a8a;">Stream&lt;ContractItemResponse&gt;</div>
<div class="a" style="left:570px;top:207px;width:103.59999999999991px;height:13px;background:#f1f1f1;border-radius:4px;"></div>
<div class="a t" style="left:577.2px;top:207.25px;font-family:'Liberation Sans',sans-serif;font-size:12.65px;line-height:12.65px;color:#8a8a8a;">Stream&lt;String&gt;</div>
<div class="a" style="left:626px;top:226px;width:90.29999999999995px;height:18px;background:#f1f1f1;border-radius:4px;"></div>
<div class="a t" style="left:631.2px;top:229.25px;font-family:'Liberation Sans',sans-serif;font-size:12.65px;line-height:12.65px;color:#8a8a8a;">anotherString:</div>
<div class="a t" style="left:720.2px;top:229.32px;font-family:'Liberation Mono',monospace;font-size:13px;line-height:13px;color:#000;"><span style="color:#067d17;">"</span><span style="color:#067d17;text-decoration:underline wavy #8fcf8f;text-decoration-skip-ink:none;text-underline-offset:2px;text-decoration-thickness:1px">updateme</span><span style="color:#067d17;">"</span><span style="color:#080808;">))</span></div>
<div class="a t" style="left:667px;top:141.32px;font-family:'Liberation Mono',monospace;font-size:13px;line-height:13px;color:#c5d3ee;font-style:italic;">kasService: "com.backend.connectable.kas.service.KasService@15f4f652"</div>
<svg class="a" style="left:119px;top:75px;" width="10" height="10" viewBox="0 0 10 10"><circle cx="5" cy="3" r="2.2" fill="#a8b0b8"/><path d="M1 9 C1 6.5 3 5.8 5 5.8 C7 5.8 9 6.5 9 9 Z" fill="#a8b0b8"/></svg>
<div class="a t" style="left:132px;top:75.80px;font-family:'Liberation Sans',sans-serif;font-size:12px;line-height:12px;color:#818181;">Yeongsang Jo</div>
<svg class="a" style="left:44px;top:119px;" width="10" height="12" viewBox="0 0 10 12"><path d="M0.5 0.5 L9.5 6 L0.5 11.5 Z" fill="#59a869"/></svg>
<svg class="a" style="left:50px;top:139px;" width="17" height="15" viewBox="0 0 17 15"><circle cx="7.8" cy="8" r="6.2" fill="#db5860"/><path d="M7.2 3.4 L9.4 6 L14.7 1" stroke="#fcfaed" stroke-width="3.6" fill="none"/><path d="M7.2 3.4 L9.4 6 L14.7 1" stroke="#555" stroke-width="1.4" fill="none"/></svg>
<svg class="a" style="left:76px;top:31px;" width="9" height="12" viewBox="0 0 9 12"><path d="M0.5 11.2 L8.5 11.2 L8.5 4.7 L4.5 0.5 L0.5 4.7 Z" fill="#fff" stroke="#cfcfcf"/><path d="M2.5 7.5 L6.5 7.5" stroke="#cfcfcf"/></svg>
<svg class="a" style="left:76px;top:121px;" width="9" height="12" viewBox="0 0 9 12"><path d="M0.5 0.5 L8.5 0.5 L8.5 7 L4.5 11.2 L0.5 7 Z" fill="#fff" stroke="#cfcfcf"/><path d="M2.5 4.5 L6.5 4.5" stroke="#cfcfcf"/></svg>
<svg class="a" style="left:76px;top:319px;" width="9" height="12" viewBox="0 0 9 12"><path d="M0.5 0.5 L8.5 0.5 L8.5 7 L4.5 11.2 L0.5 7 Z" fill="#fff" stroke="#cfcfcf"/><path d="M2.5 4.5 L6.5 4.5" stroke="#cfcfcf"/></svg>
</div>
<div class="a" style="left:493px;top:471px;width:1162px;height:14px;background:#f5f5f5;"></div>
<div class="a" style="left:501px;top:474px;width:1146px;height:8px;background:#c6c6c6;border-radius:4px;"></div>
<svg class="a" style="left:1548px;top:82px;" width="13" height="12" viewBox="0 0 13 12"><path d="M6.5 0.5 L12.5 11.5 L0.5 11.5 Z" fill="#f0c020"/><rect x="5.8" y="4" width="1.4" height="4.2" fill="#fff"/><rect x="5.8" y="9" width="1.4" height="1.4" fill="#fff"/></svg>
<div class="a t" style="left:1563.5px;top:82.30px;font-family:'Liberation Sans',sans-serif;font-size:12px;line-height:12px;color:#555;">21</div>
<svg class="a" style="left:1584px;top:81px;" width="13" height="14" viewBox="0 0 13 14"><path d="M1 6 L5 10 L12 1" stroke="#4a9a5a" stroke-width="2" fill="none"/><path d="M1 12 L3 10.5 L5 12.5 L7 10.5 L9 12.5 L11 10.5" stroke="#4a9a5a" stroke-width="0.9" fill="none"/></svg>
<div class="a t" style="left:1599px;top:82.30px;font-family:'Liberation Sans',sans-serif;font-size:12px;line-height:12px;color:#555;">3</div>
<svg class="a" style="left:1616px;top:84px;" width="9" height="6" viewBox="0 0 9 6"><path d="M0.8 5.2 L4.5 1 L8.2 5.2" stroke="#6e6e6e" stroke-width="1.3" fill="none"/></svg>
<svg class="a" style="left:1636px;top:85px;" width="9" height="6" viewBox="0 0 9 6"><path d="M0.8 0.8 L4.5 5 L8.2 0.8" stroke="#6e6e6e" stroke-width="1.3" fill="none"/></svg>
<div class="a" style="left:1642px;top:117px;width:13px;height:2px;background:#f0c020;"></div>
<div class="a" style="left:1642px;top:158px;width:13px;height:2px;background:#f0c020;"></div>
<div class="a" style="left:1642px;top:205px;width:13px;height:2px;background:#f0c020;"></div>
<div class="a" style="left:1642px;top:228px;width:13px;height:2px;background:#f0c020;"></div>
<div class="a" style="left:1642px;top:253px;width:13px;height:2px;background:#f0c020;"></div>
<div class="a" style="left:1642px;top:263px;width:13px;height:2px;background:#f0c020;"></div>
<div class="a" style="left:1642px;top:297px;width:13px;height:2px;background:#f0c020;"></div>
<div class="a" style="left:1642px;top:309px;width:13px;height:2px;background:#f0c020;"></div>
<div class="a" style="left:1642px;top:325px;width:13px;height:2px;background:#f0c020;"></div>
<div class="a" style="left:1642px;top:336px;width:13px;height:2px;background:#f0c020;"></div>
<div class="a" style="left:1642px;top:346px;width:13px;height:2px;background:#f0c020;"></div>
<div class="a" style="left:1642px;top:358px;width:13px;height:2px;background:#f0c020;"></div>
<div class="a" style="left:1642px;top:368px;width:13px;height:2px;background:#f0c020;"></div>
<div class="a" style="left:1642px;top:379px;width:13px;height:2px;background:#f0c020;"></div>
<div class="a" style="left:1642px;top:402px;width:13px;height:2px;background:#f0c020;"></div>
<div class="a" style="left:1642px;top:412px;width:13px;height:2px;background:#f0c020;"></div>
<div class="a" style="left:1642px;top:428px;width:13px;height:2px;background:#f0c020;"></div>
<div class="a" style="left:1642px;top:438px;width:13px;height:2px;background:#f0c020;"></div>
<div class="a" style="left:1642px;top:454px;width:13px;height:2px;background:#f0c020;"></div>
<div class="a" style="left:1642px;top:121px;width:13px;height:2px;background:#f5b5b5;"></div>
<div class="a" style="left:1636px;top:114px;width:1px;height:5px;background:#8fc0f0;"></div>
<div class="a" style="left:1642px;top:173px;width:13px;height:2px;background:#2154a6;"></div>
<div class="a" style="left:1643px;top:166px;width:8px;height:30px;background:#c6c6c6;border-radius:4px;"></div>
<div class="a" style="left:16px;top:486px;width:1639px;height:26px;background:#e4e7ee;"></div>
<div class="a" style="left:16px;top:485px;width:1639px;height:1px;background:#c9c9c9;"></div>
<div class="a" style="left:16px;top:512px;width:1639px;height:1px;background:#c9c9c9;"></div>
<div class="a t" style="left:22.3px;top:494.05px;font-family:'Liberation Sans',sans-serif;font-size:12.3px;line-height:12.3px;color:#000;">Debug:</div>
<svg class="a" style="left:84px;top:493px;" width="16" height="16" viewBox="0 0 16 16"><path d="M5.5 1.5 L1 6.5 L5.5 11.5 Z" fill="#e8692c"/><path d="M7.5 1.5 L12 6.5 L7.5 11.5 Z" fill="#59a869"/><circle cx="11.5" cy="12.5" r="2.3" fill="#10c010"/></svg>
<div class="a t" style="left:102.6px;top:493.76px;font-family:'Liberation Sans',sans-serif;font-size:12.63px;line-height:12.63px;color:#000;">KasServiceTestWithTestnet.findAllTokensOfContractAddress...</div>
<svg class="a" style="left:458px;top:496px;" width="9" height="9" viewBox="0 0 9 9"><path d="M0.5 0.5 L8.5 8.5 M8.5 0.5 L0.5 8.5" stroke="#a8a8a8" stroke-width="1.1"/></svg>
<div class="a" style="left:70px;top:510px;width:408px;height:3px;background:#3d7fcf;border-radius:1.5px;"></div>
<svg class="a" style="left:1607px;top:492px;" width="14" height="14" viewBox="0 0 14 14"><path d="M5.43 2.25 L5.41 0.39 L8.59 0.39 L8.57 2.25 L10.33 3.27 L11.93 2.32 L13.52 5.07 L11.90 5.99 L11.90 8.01 L13.52 8.93 L11.93 11.68 L10.33 10.73 L8.57 11.75 L8.59 13.61 L5.41 13.61 L5.43 11.75 L3.67 10.73 L2.07 11.68 L0.48 8.93 L2.10 8.01 L2.10 5.99 L0.48 5.07 L2.07 2.32 L3.67 3.27 Z" fill="#6e6e6e"/><circle cx="7" cy="7" r="2.2" fill="#e4e7ee"/></svg>
<div class="a" style="left:1634px;top:498px;width:13px;height:2px;background:#6e6e6e;"></div>
<div class="a" style="left:16px;top:513px;width:28px;height:461px;background:#f2f2f2;"></div>
<div class="a" style="left:44px;top:513px;width:1px;height:461px;background:#d1d1d1;"></div>
<svg class="a" style="left:22px;top:518px;" width="17" height="17" viewBox="0 0 17 17"><path d="M10.5 4.5 L9 4.5 A4.6 4.6 0 1 0 9 13.7" fill="none" stroke="#59a869" stroke-width="2"/><path d="M9.5 0.8 L15 4.5 L9.5 8.2 Z" fill="#59a869"/><rect x="9" y="10.5" width="5.5" height="5.5" fill="#6e6e6e"/></svg>
<svg class="a" style="left:22px;top:545px;" width="18" height="17" viewBox="0 0 18 17"><path d="M1 3 L8 8.5 L1 14 Z" fill="#59a869"/><circle cx="10.3" cy="6.5" r="5.9" fill="#db5860"/><path d="M9.3 2.5 L11.3 2.5 L11.3 6 L9.3 6 Z M9.3 7.5 L11.3 7.5 L11.3 9.5 L9.3 9.5 Z" fill="#fff"/></svg>
<svg class="a" style="left:22px;top:571px;" width="17" height="17" viewBox="0 0 17 17"><path d="M3.5 5.5 A5 5 0 0 1 12.5 4.5" fill="none" stroke="#6e6e6e" stroke-width="1.4"/><path d="M12.5 10.5 A5 5 0 0 1 3.5 11.5" fill="none" stroke="#6e6e6e" stroke-width="1.4"/><path d="M2 5.5 L5 3.5 L5 7 Z M14 10.5 L11 12.5 L11 9 Z" fill="#6e6e6e"/><rect x="0.8" y="6.8" width="3" height="3" fill="none" stroke="#6e6e6e" stroke-width="1.1"/><rect x="12.2" y="6.8" width="3" height="3" fill="none" stroke="#6e6e6e" stroke-width="1.1"/></svg>
<svg class="a" style="left:22px;top:597px;" width="16" height="16" viewBox="0 0 16 16"><path d="M2 14 L9 7" stroke="#6e6e6e" stroke-width="2.5"/><path d="M8 3 A4 4 0 0 1 14 2 L11 5 L12 7 L14 8 L15 6 A4 4 0 0 1 9 9 Z" fill="#6e6e6e"/></svg>
<div class="a" style="left:20px;top:620px;width:20px;height:1px;background:#d1d1d1;"></div>
<svg class="a" style="left:22px;top:629px;" width="16" height="16" viewBox="0 0 16 16"><rect x="2" y="2" width="3" height="12" fill="#59a869"/><path d="M7 2 L14 8 L7 14 Z" fill="#59a869"/></svg>
<svg class="a" style="left:22px;top:655px;" width="16" height="16" viewBox="0 0 16 16"><rect x="3.5" y="2" width="3" height="12" fill="#b5b5b5"/><rect x="9.5" y="2" width="3" height="12" fill="#b5b5b5"/></svg>
<div class="a" style="left:24.5px;top:684px;width:11px;height:11px;background:#db5860;"></div>
<div class="a" style="left:20px;top:706px;width:20px;height:1px;background:#d1d1d1;"></div>
<svg class="a" style="left:22px;top:714px;" width="16" height="16" viewBox="0 0 16 16"><circle cx="6" cy="10" r="5" fill="#db5860"/><circle cx="10.5" cy="5.5" r="4.5" fill="#db5860"/></svg>
<svg class="a" style="left:22px;top:741px;" width="16" height="16" viewBox="0 0 16 16"><circle cx="8" cy="8" r="6" fill="#db5860" opacity="0.8"/><path d="M2 14 L14 2" stroke="#f2f2f2" stroke-width="2"/><path d="M2.5 13.5 L13.5 2.5" stroke="#db5860" stroke-width="1"/></svg>
<div class="a" style="left:20px;top:765px;width:20px;height:1px;background:#d1d1d1;"></div>
<svg class="a" style="left:22px;top:774px;" width="16" height="14" viewBox="0 0 16 14"><path d="M1 3.5 L5 3.5 L6.5 1 L10 1 L11.5 3.5 L15 3.5 L15 13 L1 13 Z" fill="#6e6e6e"/><circle cx="8" cy="8" r="3" fill="#f2f2f2"/><circle cx="8" cy="8" r="1.8" fill="#6e6e6e"/></svg>
<div class="a" style="left:20px;top:798px;width:20px;height:1px;background:#d1d1d1;"></div>
<svg class="a" style="left:22px;top:806px;" width="17" height="17" viewBox="0 0 17 17"><path d="M5.43 2.25 L5.41 0.39 L8.59 0.39 L8.57 2.25 L10.33 3.27 L11.93 2.32 L13.52 5.07 L11.90 5.99 L11.90 8.01 L13.52 8.93 L11.93 11.68 L10.33 10.73 L8.57 11.75 L8.59 13.61 L5.41 13.61 L5.43 11.75 L3.67 10.73 L2.07 11.68 L0.48 8.93 L2.10 8.01 L2.10 5.99 L0.48 5.07 L2.07 2.32 L3.67 3.27 Z" fill="#6e6e6e"/><circle cx="7" cy="7" r="2.2" fill="#f2f2f2"/><path d="M11 14 L16 14 L13.5 16.5 Z" fill="#6e6e6e"/></svg>
<div class="a" style="left:20px;top:831px;width:20px;height:1px;background:#d1d1d1;"></div>
<svg class="a" style="left:22px;top:839px;" width="16" height="16" viewBox="0 0 16 16"><path d="M9 1 L15 7 L13 8 L10 11 L10 14 L2 6 L5 6 L8 3 Z" fill="#6e6e6e"/><path d="M5.5 10.5 L1 15" stroke="#6e6e6e" stroke-width="1.8"/></svg>
<div class="a" style="left:45px;top:513px;width:1610px;height:28px;background:#f2f2f2;"></div>
<div class="a" style="left:45px;top:540px;width:1610px;height:1px;background:#d1d1d1;"></div>
<div class="a t" style="left:58.6px;top:521.87px;font-family:'Liberation Sans',sans-serif;font-size:11.45px;line-height:11.45px;color:#000;">Debugger</div>
<div class="a" style="left:45px;top:539px;width:78px;height:2.5px;background:#3d7fcf;"></div>
<div class="a t" style="left:135px;top:521.87px;font-family:'Liberation Sans',sans-serif;font-size:11.45px;line-height:11.45px;color:#000;">Console</div>
<svg class="a" style="left:196px;top:519px;" width="14" height="14" viewBox="0 0 14 14"><rect x="1" y="1" width="12" height="2.2" fill="#6e6e6e"/><rect x="1" y="6" width="12" height="2.2" fill="#389fd6"/><rect x="1" y="11" width="12" height="2.2" fill="#6e6e6e"/></svg>
<div class="a" style="left:219px;top:516px;width:1px;height:21px;background:#d1d1d1;"></div>
<svg class="a" style="left:228px;top:518px;" width="16" height="16" viewBox="0 0 16 16"><path d="M1.5 8 L6 3.5 L10 7.5 L13 7.5" stroke="#389fd6" stroke-width="1.6" fill="none"/><path d="M11 4 L15 7.5 L11 11 Z" fill="#389fd6"/><rect x="1" y="12.5" width="13" height="2" fill="#6e6e6e"/></svg>
<svg class="a" style="left:254px;top:518px;" width="16" height="16" viewBox="0 0 16 16"><path d="M7.5 0 L7.5 8" stroke="#389fd6" stroke-width="2"/><path d="M3 6 L12 6 L7.5 11 Z" fill="#389fd6"/><rect x="1.5" y="12.5" width="12" height="2" fill="#6e6e6e"/></svg>
<svg class="a" style="left:280px;top:518px;" width="16" height="16" viewBox="0 0 16 16"><path d="M7.5 0 L7.5 8" stroke="#db5860" stroke-width="2"/><path d="M3 6 L12 6 L7.5 11 Z" fill="#db5860"/><rect x="1.5" y="12.5" width="12" height="2" fill="#6e6e6e"/></svg>
<svg class="a" style="left:306px;top:518px;" width="16" height="16" viewBox="0 0 16 16"><path d="M7.5 4 L7.5 12" stroke="#389fd6" stroke-width="2"/><path d="M3 6 L12 6 L7.5 1 Z" fill="#389fd6"/><rect x="1.5" y="12.5" width="12" height="2" fill="#6e6e6e"/></svg>
<svg class="a" style="left:332px;top:518px;" width="18" height="16" viewBox="0 0 18 16"><path d="M2 1 L7 6" stroke="#389fd6" stroke-width="2"/><path d="M3 8 L9 8 L9 2 Z" fill="#389fd6"/><path d="M10 5.5 L14 5.5 M12 5.5 L12 13.5 M10 13.5 L14 13.5" stroke="#6e6e6e" stroke-width="1"/></svg>
<div class="a" style="left:356px;top:516px;width:1px;height:21px;background:#d1d1d1;"></div>
<svg class="a" style="left:367px;top:520px;" width="13" height="12" viewBox="0 0 13 12"><rect x="0" y="0" width="12.5" height="12" fill="#6e6e6e"/><rect x="2" y="2" width="8.5" height="2" fill="#f2f2f2"/><rect x="2" y="5.5" width="2" height="2" fill="#f2f2f2"/><rect x="5.3" y="5.5" width="2" height="2" fill="#f2f2f2"/><rect x="8.5" y="5.5" width="2" height="2" fill="#f2f2f2"/><rect x="2" y="8.5" width="2" height="2" fill="#f2f2f2"/><rect x="5.3" y="8.5" width="2" height="2" fill="#f2f2f2"/><rect x="8.5" y="8.5" width="2" height="2" fill="#f2f2f2"/></svg>
<svg class="a" style="left:393px;top:520px;" width="13" height="12" viewBox="0 0 13 12"><path d="M0 1 L5 1 M0 5.5 L5 5.5 M0 10 L5 10 M8 1 L13 1 M8 5.5 L13 5.5 M8 10 L13 10 M5 10 C7 10 6 1 8 1" stroke="#bdbdbd" stroke-width="1.6" fill="none"/></svg>
<svg class="a" style="left:1633px;top:519px;" width="18" height="16" viewBox="0 0 18 16"><rect x="0" y="0" width="7" height="5" fill="#6e6e6e"/><rect x="8" y="0" width="7" height="5" fill="#6e6e6e"/><rect x="0" y="6" width="15" height="5" fill="#6e6e6e"/><path d="M12 13 L17 13 L14.5 15.5 Z" fill="#6e6e6e"/></svg>
<div class="a" style="left:45px;top:541px;width:218px;height:433px;background:#ffffff;"></div>
<div class="a" style="left:263px;top:541px;width:1px;height:433px;background:#d1d1d1;"></div>
<svg class="a" style="left:55px;top:548px;" width="14" height="12" viewBox="0 0 14 12"><path d="M1.5 6 L5 9.5 L12.5 1.5" stroke="#ee7d3b" stroke-width="2.2" fill="none"/></svg>
<div class="a t" style="left:73.5px;top:549.72px;font-family:'Liberation Sans',sans-serif;font-size:12.8px;line-height:12.8px;color:#000;">"main"@... RUNNING</div>
<svg class="a" style="left:216.5px;top:548.5px;" width="13" height="14" viewBox="0 0 13 14"><path d="M0.5 0.5 L12.5 0.5 L8 6.5 L8 13 L5 13 L5 6.5 Z" fill="#6e6e6e"/></svg>
<svg class="a" style="left:243.5px;top:552.5px;" width="10" height="6" viewBox="0 0 10 6"><path d="M0 0 L9.5 0 L4.75 5 Z" fill="#6e6e6e"/></svg>
<div class="a" style="left:45px;top:569px;width:218px;height:1px;background:#d6d6d6;"></div>
<div class="a" style="left:45px;top:570px;width:204px;height:390px;background:#fdfde4;"></div>
<div class="a" style="left:45px;top:570px;width:204px;height:20px;background:#d5d5d5;"></div>
<div class="a" style="left:45px;top:570px;width:204px;height:390px;overflow:hidden">
<svg class="a" style="left:11px;top:4px;" width="14" height="13" viewBox="0 0 14 13"><path d="M4 2 L1 5 L4 8" stroke="#6e6e6e" stroke-width="1.1" fill="none"/><path d="M1.5 5 L9 5 C11.5 5 13 6.5 13 9 C13 11.5 11.5 12.5 9 12.5 L6 12.5" stroke="#6e6e6e" stroke-width="1.1" fill="none"/></svg>
<div class="a t" style="left:26.200000000000003px;top:4.23px;font-family:'Liberation Sans',sans-serif;font-size:13.85px;line-height:13.85px;color:#000;">findAllTokensOfContractAddressesOwnedByUser:45</div>
<div class="a t" style="left:26.200000000000003px;top:24.23px;font-family:'Liberation Sans',sans-serif;font-size:13.85px;line-height:13.85px;color:#8c8c8c;">invoke0:-1, NativeMethodAccessorImpl</div>
<div class="a t" style="left:26.200000000000003px;top:44.23px;font-family:'Liberation Sans',sans-serif;font-size:13.85px;line-height:13.85px;color:#8c8c8c;">invoke:62, NativeMethodAccessorImpl</div>
<div class="a t" style="left:26.200000000000003px;top:64.23px;font-family:'Liberation Sans',sans-serif;font-size:13.85px;line-height:13.85px;color:#8c8c8c;">invoke:43, DelegatingMethodAccessorImpl</div>
<div class="a t" style="left:26.200000000000003px;top:84.23px;font-family:'Liberation Sans',sans-serif;font-size:13.85px;line-height:13.85px;color:#8c8c8c;">invoke:566, Method <i>(java.lang.reflect)</i></div>
<div class="a t" style="left:26.200000000000003px;top:104.23px;font-family:'Liberation Sans',sans-serif;font-size:13.85px;line-height:13.85px;color:#8c8c8c;">invokeMethod:725, ReflectionUtils</div>
<div class="a t" style="left:26.200000000000003px;top:124.23px;font-family:'Liberation Sans',sans-serif;font-size:13.85px;line-height:13.85px;color:#8c8c8c;">proceed:60, MethodInvocation</div>
<div class="a t" style="left:26.200000000000003px;top:144.23px;font-family:'Liberation Sans',sans-serif;font-size:13.85px;line-height:13.85px;color:#8c8c8c;">proceed:131, InvocationInterceptorChain</div>
<div class="a t" style="left:26.200000000000003px;top:164.23px;font-family:'Liberation Sans',sans-serif;font-size:13.85px;line-height:13.85px;color:#8c8c8c;">intercept:149, TimeoutExtension</div>
<div class="a t" style="left:26.200000000000003px;top:184.23px;font-family:'Liberation Sans',sans-serif;font-size:13.85px;line-height:13.85px;color:#8c8c8c;">interceptTestableMethod:140, TimeoutExtension</div>
<div class="a t" style="left:26.200000000000003px;top:204.23px;font-family:'Liberation Sans',sans-serif;font-size:13.85px;line-height:13.85px;color:#8c8c8c;">interceptTestMethod:84, TimeoutExtension</div>
<div class="a t" style="left:26.200000000000003px;top:224.23px;font-family:'Liberation Sans',sans-serif;font-size:13.85px;line-height:13.85px;color:#8c8c8c;">apply:-1, 936292831 <i>(org.junit)</i></div>
<div class="a t" style="left:26.200000000000003px;top:244.23px;font-family:'Liberation Sans',sans-serif;font-size:13.85px;line-height:13.85px;color:#8c8c8c;">lambda$ofVoidMethod$0:115, InterceptingExecutableInvoker</div>
<div class="a t" style="left:26.200000000000003px;top:264.23px;font-family:'Liberation Sans',sans-serif;font-size:13.85px;line-height:13.85px;color:#8c8c8c;">apply:-1, 537066525 <i>(org.junit)</i></div>
<div class="a t" style="left:26.200000000000003px;top:284.23px;font-family:'Liberation Sans',sans-serif;font-size:13.85px;line-height:13.85px;color:#8c8c8c;">lambda$invoke$0:105, ExecutableInvoker</div>
<div class="a t" style="left:26.200000000000003px;top:304.23px;font-family:'Liberation Sans',sans-serif;font-size:13.85px;line-height:13.85px;color:#8c8c8c;">apply:-1, 820677667 <i>(org.junit)</i></div>
<div class="a t" style="left:26.200000000000003px;top:324.23px;font-family:'Liberation Sans',sans-serif;font-size:13.85px;line-height:13.85px;color:#8c8c8c;">proceed:106, InvocationInterceptorChain</div>
<div class="a t" style="left:26.200000000000003px;top:344.23px;font-family:'Liberation Sans',sans-serif;font-size:13.85px;line-height:13.85px;color:#8c8c8c;">proceed:64, InvocationInterceptorChain</div>
<div class="a t" style="left:26.200000000000003px;top:364.23px;font-family:'Liberation Sans',sans-serif;font-size:13.85px;line-height:13.85px;color:#8c8c8c;">chainAndInvoke:45, InvocationInterceptorChain</div>
<div class="a t" style="left:26.200000000000003px;top:384.23px;font-family:'Liberation Sans',sans-serif;font-size:13.85px;line-height:13.85px;color:#8c8c8c;">invoke:37, InvocationInterceptorChain</div>
</div>
<div class="a" style="left:249px;top:570px;width:14px;height:390px;background:#f7f7f7;"></div>
<div class="a" style="left:252px;top:573px;width:8px;height:82px;background:#c6c6c6;border-radius:4px;"></div>
<div class="a" style="left:45px;top:960px;width:218px;height:14px;background:#f5f5f5;"></div>
<div class="a" style="left:48px;top:963px;width:43px;height:8px;background:#c6c6c6;border-radius:4px;"></div>
<div class="a" style="left:264px;top:541px;width:1391px;height:433px;background:#ffffff;"></div>
<div class="a" style="left:264px;top:569px;width:1391px;height:1px;background:#d6d6d6;"></div>
<div class="a t" style="left:272px;top:551.27px;font-family:'Liberation Mono',monospace;font-size:12.8px;line-height:12.8px;color:#871094;">kasService</div>
<div class="a t" style="left:1556px;top:549.46px;font-family:'Liberation Sans',sans-serif;font-size:12.4px;line-height:12.4px;color:#6e6e6e;">Java</div>
<svg class="a" style="left:1585px;top:554px;" width="7" height="5" viewBox="0 0 7 5"><path d="M0 0 L6.5 0 L3.25 4 Z" fill="#6e6e6e"/></svg>
<svg class="a" style="left:1607px;top:547px;" width="16" height="15" viewBox="0 0 16 15"><path d="M6 0 L6 11 M0.5 5.5 L11.5 5.5" stroke="#6e6e6e" stroke-width="1.6"/><circle cx="9.5" cy="12" r="2" fill="none" stroke="#6e6e6e" stroke-width="1"/><circle cx="14" cy="12" r="2" fill="none" stroke="#6e6e6e" stroke-width="1"/></svg>
<svg class="a" style="left:1634px;top:551px;" width="10" height="6" viewBox="0 0 10 6"><path d="M0 0 L9.5 0 L4.75 5 Z" fill="#6e6e6e"/></svg>
<div class="a" style="left:264px;top:570px;width:1391px;height:20px;background:#2675bf;"></div>
<svg class="a" style="left:270px;top:576px;" width="12" height="8" viewBox="0 0 12 8"><path d="M1 1 L6 6 L11 1" stroke="#fff" stroke-width="1.4" fill="none"/></svg>
<svg class="a" style="left:290px;top:574px;" width="12" height="12" viewBox="0 0 12 12"><rect x="0" y="0" width="12" height="12" fill="#a9b7c6"/><rect x="2" y="2" width="8" height="2" fill="#2675bf"/><rect x="2" y="5" width="2" height="2" fill="#2675bf"/><rect x="5" y="5" width="2" height="2" fill="#2675bf"/><rect x="8" y="5" width="2" height="2" fill="#2675bf"/><rect x="2" y="8" width="2" height="2" fill="#2675bf"/><rect x="5" y="8" width="2" height="2" fill="#2675bf"/><rect x="8" y="8" width="2" height="2" fill="#2675bf"/></svg>
<div class="a t" style="left:307px;top:574.05px;font-family:'Liberation Sans',sans-serif;font-size:13.59px;line-height:13.59px;color:#fff;">result = {KasService$$EnhancerBySpringCGLIB$$a0cef57@17609} "com.backend.connectable.kas.service.KasService@15f4f652"</div>
<svg class="a" style="left:307px;top:593px;" width="14" height="14" viewBox="0 0 14 14"><circle cx="7" cy="7" r="7" fill="#f4c27a"/><text x="7" y="10.8" font-family="Liberation Sans" font-size="10" fill="#5a4020" text-anchor="middle">f</text></svg>
<div class="a t" style="left:325.3px;top:594.30px;font-family:'Liberation Sans',sans-serif;font-size:13.3px;line-height:13.3px;color:#000;"><span style="color:#901c1c">CGLIB$BOUND</span> = <span style="color:#000">false</span></div>
<svg class="a" style="left:290px;top:615px;" width="7" height="10" viewBox="0 0 7 10"><path d="M1 0.8 L5.5 5 L1 9.2" fill="none" stroke="#6e6e6e" stroke-width="1.3"/></svg>
<svg class="a" style="left:307px;top:613px;" width="14" height="14" viewBox="0 0 14 14"><circle cx="7" cy="7" r="7" fill="#f4c27a"/><text x="7" y="10.8" font-family="Liberation Sans" font-size="10" fill="#5a4020" text-anchor="middle">f</text></svg>
<div class="a t" style="left:325.3px;top:614.30px;font-family:'Liberation Sans',sans-serif;font-size:13.3px;line-height:13.3px;color:#000;"><span style="color:#901c1c">CGLIB$CALLBACK_0</span> = <span style="color:#7f7f7f">{CglibAopProxy$DynamicAdvisedInterceptor@17669}</span></div>
<svg class="a" style="left:290px;top:635px;" width="7" height="10" viewBox="0 0 7 10"><path d="M1 0.8 L5.5 5 L1 9.2" fill="none" stroke="#6e6e6e" stroke-width="1.3"/></svg>
<svg class="a" style="left:307px;top:633px;" width="14" height="14" viewBox="0 0 14 14"><circle cx="7" cy="7" r="7" fill="#f4c27a"/><text x="7" y="10.8" font-family="Liberation Sans" font-size="10" fill="#5a4020" text-anchor="middle">f</text></svg>
<div class="a t" style="left:325.3px;top:634.30px;font-family:'Liberation Sans',sans-serif;font-size:13.3px;line-height:13.3px;color:#000;"><span style="color:#901c1c">CGLIB$CALLBACK_1</span> = <span style="color:#7f7f7f">{CglibAopProxy$StaticUnadvisedInterceptor@17670}</span></div>
<svg class="a" style="left:290px;top:655px;" width="7" height="10" viewBox="0 0 7 10"><path d="M1 0.8 L5.5 5 L1 9.2" fill="none" stroke="#6e6e6e" stroke-width="1.3"/></svg>
<svg class="a" style="left:307px;top:653px;" width="14" height="14" viewBox="0 0 14 14"><circle cx="7" cy="7" r="7" fill="#f4c27a"/><text x="7" y="10.8" font-family="Liberation Sans" font-size="10" fill="#5a4020" text-anchor="middle">f</text></svg>
<div class="a t" style="left:325.3px;top:654.30px;font-family:'Liberation Sans',sans-serif;font-size:13.3px;line-height:13.3px;color:#000;"><span style="color:#901c1c">CGLIB$CALLBACK_2</span> = <span style="color:#7f7f7f">{CglibAopProxy$SerializableNoOp@17671}</span></div>
<svg class="a" style="left:290px;top:675px;" width="7" height="10" viewBox="0 0 7 10"><path d="M1 0.8 L5.5 5 L1 9.2" fill="none" stroke="#6e6e6e" stroke-width="1.3"/></svg>
<svg class="a" style="left:307px;top:673px;" width="14" height="14" viewBox="0 0 14 14"><circle cx="7" cy="7" r="7" fill="#f4c27a"/><text x="7" y="10.8" font-family="Liberation Sans" font-size="10" fill="#5a4020" text-anchor="middle">f</text></svg>
<div class="a t" style="left:325.3px;top:674.30px;font-family:'Liberation Sans',sans-serif;font-size:13.3px;line-height:13.3px;color:#000;"><span style="color:#901c1c">CGLIB$CALLBACK_3</span> = <span style="color:#7f7f7f">{CglibAopProxy$StaticDispatcher@17672}</span></div>
<svg class="a" style="left:290px;top:695px;" width="7" height="10" viewBox="0 0 7 10"><path d="M1 0.8 L5.5 5 L1 9.2" fill="none" stroke="#6e6e6e" stroke-width="1.3"/></svg>
<svg class="a" style="left:307px;top:693px;" width="14" height="14" viewBox="0 0 14 14"><circle cx="7" cy="7" r="7" fill="#f4c27a"/><text x="7" y="10.8" font-family="Liberation Sans" font-size="10" fill="#5a4020" text-anchor="middle">f</text></svg>
<div class="a t" style="left:325.3px;top:694.30px;font-family:'Liberation Sans',sans-serif;font-size:13.3px;line-height:13.3px;color:#000;"><span style="color:#901c1c">CGLIB$CALLBACK_4</span> = <span style="color:#7f7f7f">{CglibAopProxy$AdvisedDispatcher@17673}</span></div>
<svg class="a" style="left:290px;top:715px;" width="7" height="10" viewBox="0 0 7 10"><path d="M1 0.8 L5.5 5 L1 9.2" fill="none" stroke="#6e6e6e" stroke-width="1.3"/></svg>
<svg class="a" style="left:307px;top:713px;" width="14" height="14" viewBox="0 0 14 14"><circle cx="7" cy="7" r="7" fill="#f4c27a"/><text x="7" y="10.8" font-family="Liberation Sans" font-size="10" fill="#5a4020" text-anchor="middle">f</text></svg>
<div class="a t" style="left:325.3px;top:714.30px;font-family:'Liberation Sans',sans-serif;font-size:13.3px;line-height:13.3px;color:#000;"><span style="color:#901c1c">CGLIB$CALLBACK_5</span> = <span style="color:#7f7f7f">{CglibAopProxy$EqualsInterceptor@17674}</span></div>
<svg class="a" style="left:290px;top:735px;" width="7" height="10" viewBox="0 0 7 10"><path d="M1 0.8 L5.5 5 L1 9.2" fill="none" stroke="#6e6e6e" stroke-width="1.3"/></svg>
<svg class="a" style="left:307px;top:733px;" width="14" height="14" viewBox="0 0 14 14"><circle cx="7" cy="7" r="7" fill="#f4c27a"/><text x="7" y="10.8" font-family="Liberation Sans" font-size="10" fill="#5a4020" text-anchor="middle">f</text></svg>
<div class="a t" style="left:325.3px;top:734.30px;font-family:'Liberation Sans',sans-serif;font-size:13.3px;line-height:13.3px;color:#000;"><span style="color:#901c1c">CGLIB$CALLBACK_6</span> = <span style="color:#7f7f7f">{CglibAopProxy$HashCodeInterceptor@17675}</span></div>
<svg class="a" style="left:307px;top:753px;" width="14" height="14" viewBox="0 0 14 14"><circle cx="7" cy="7" r="7" fill="#f4c27a"/><text x="7" y="10.8" font-family="Liberation Sans" font-size="10" fill="#5a4020" text-anchor="middle">f</text><path d="M0.5 2.5 L3 0.5" stroke="#777" stroke-width="1.5"/></svg>
<div class="a t" style="left:325.3px;top:754.30px;font-family:'Liberation Sans',sans-serif;font-size:13.3px;line-height:13.3px;color:#000;"><span style="color:#901c1c">kasContractService</span> = <span style="color:#000">null</span></div>
<svg class="a" style="left:307px;top:773px;" width="14" height="14" viewBox="0 0 14 14"><circle cx="7" cy="7" r="7" fill="#f4c27a"/><text x="7" y="10.8" font-family="Liberation Sans" font-size="10" fill="#5a4020" text-anchor="middle">f</text><path d="M0.5 2.5 L3 0.5" stroke="#777" stroke-width="1.5"/></svg>
<div class="a t" style="left:325.3px;top:774.30px;font-family:'Liberation Sans',sans-serif;font-size:13.3px;line-height:13.3px;color:#000;"><span style="color:#901c1c">kasTokenService</span> = <span style="color:#000">null</span></div>
<svg class="a" style="left:272px;top:795px;" width="7" height="10" viewBox="0 0 7 10"><path d="M1 0.8 L5.5 5 L1 9.2" fill="none" stroke="#6e6e6e" stroke-width="1.3"/></svg>
<svg class="a" style="left:290px;top:794px;" width="12" height="12" viewBox="0 0 12 12"><rect x="0" y="0" width="12" height="2.2" fill="#f3bd5c"/><rect x="0" y="4.5" width="12" height="2.2" fill="#f3bd5c"/><rect x="0" y="9" width="12" height="2.2" fill="#f3bd5c"/></svg>
<div class="a t" style="left:307px;top:794.21px;font-family:'Liberation Sans',sans-serif;font-size:13.4px;line-height:13.4px;color:#000;"><span style="color:#901c1c">this</span> = <span style="color:#7f7f7f">{KasServiceTestWithTestnet@17607}</span></div>
<svg class="a" style="left:272px;top:815px;" width="7" height="10" viewBox="0 0 7 10"><path d="M1 0.8 L5.5 5 L1 9.2" fill="none" stroke="#6e6e6e" stroke-width="1.3"/></svg>
<svg class="a" style="left:287px;top:815px;" width="17" height="10" viewBox="0 0 17 10"><circle cx="4" cy="5.5" r="3.2" fill="none" stroke="#7a8a9a" stroke-width="1.4"/><circle cx="13" cy="5.5" r="3.2" fill="none" stroke="#7a8a9a" stroke-width="1.4"/><path d="M7 5 L10 5" stroke="#7a8a9a" stroke-width="1.3"/></svg>
<div class="a t" style="left:307px;top:814.08px;font-family:'Liberation Sans',sans-serif;font-size:13.55px;line-height:13.55px;color:#000;"><span style="color:#901c1c">kasService</span> = <span style="color:#7f7f7f">{KasService$$EnhancerBySpringCGLIB$$a0cef57@17609}</span> "com.backend.connectable.kas.service.KasService@15f4f652"</div>
<div class="a" style="left:0px;top:974px;width:1655px;height:29px;background:#f2f2f2;"></div>
<div class="a" style="left:0px;top:974px;width:1655px;height:1px;background:#c9c9c9;"></div>
<div class="a" style="left:0px;top:995px;width:1655px;height:1px;background:#c9c9c9;"></div>
<div class="a" style="left:70px;top:975px;width:71px;height:20px;background:#c6c6c6;"></div>
<svg class="a" style="left:26.5px;top:977.5px;" width="14" height="14" viewBox="0 0 14 14"><path d="M1 1.5 L9 7 L1 12.5 Z" fill="#6e6e6e"/></svg>
<div class="a t" style="left:42.4px;top:978.60px;font-family:'Liberation Sans',sans-serif;font-size:11.65px;line-height:11.65px;color:#000;">Run</div>
<svg class="a" style="left:81.6px;top:977.5px;" width="14" height="14" viewBox="0 0 14 14"><path d="M3.5 0.8 L5 2.8 M9.5 0.8 L8 2.8" stroke="#6e6e6e" stroke-width="1.3"/><rect x="3" y="2.5" width="7" height="10.5" rx="3" fill="#6e6e6e"/><path d="M0.5 5 L3 5 M0.5 8 L3 8 M0.5 11 L3 11 M10 5 L12.5 5 M10 8 L12.5 8 M10 11 L12.5 11" stroke="#6e6e6e" stroke-width="1.2"/><circle cx="11.3" cy="12.3" r="2.3" fill="#00dd00" stroke="#c6c6c6" stroke-width="0.5"/></svg>
<div class="a t" style="left:97.9px;top:978.60px;font-family:'Liberation Sans',sans-serif;font-size:11.65px;line-height:11.65px;color:#000;">Debug</div>
<svg class="a" style="left:151.6px;top:977.5px;" width="14" height="14" viewBox="0 0 14 14"><circle cx="3" cy="11" r="2.5" fill="#6e6e6e"/><circle cx="11" cy="11" r="2.5" fill="#6e6e6e"/><circle cx="7" cy="2.5" r="2" fill="none" stroke="#6e6e6e"/><path d="M3 11 L7 3 L11 11" stroke="#6e6e6e" stroke-width="1.2" fill="none"/></svg>
<div class="a t" style="left:169px;top:978.60px;font-family:'Liberation Sans',sans-serif;font-size:11.65px;line-height:11.65px;color:#000;">Endpoints</div>
<svg class="a" style="left:241px;top:977.5px;" width="14" height="14" viewBox="0 0 14 14"><circle cx="6" cy="7" r="5.3" fill="none" stroke="#6e6e6e" stroke-width="1.2"/><path d="M6 4 L6 7 L4 9" stroke="#6e6e6e" fill="none"/><path d="M8 6 L14 10 L8 14 Z" fill="#6e6e6e"/></svg>
<div class="a t" style="left:258.9px;top:978.60px;font-family:'Liberation Sans',sans-serif;font-size:11.65px;line-height:11.65px;color:#000;">Profiler</div>
<svg class="a" style="left:316px;top:977.5px;" width="14" height="14" viewBox="0 0 14 14"><path d="M1 4 L6 0.5 L8.5 3 L6 5 Z" fill="#6e6e6e"/><path d="M5 4 L13 12 L11.5 13.5 L3.5 5.5 Z" fill="#6e6e6e"/></svg>
<div class="a t" style="left:332.9px;top:978.60px;font-family:'Liberation Sans',sans-serif;font-size:11.65px;line-height:11.65px;color:#000;">Build</div>
<svg class="a" style="left:380px;top:977.5px;" width="14" height="14" viewBox="0 0 14 14"><path d="M7 1 L13 4 L7 7 L1 4 Z" fill="#6e6e6e"/><path d="M1 7 L7 10 L13 7 M1 10 L7 13 L13 10" stroke="#6e6e6e" stroke-width="1.4" fill="none"/></svg>
<div class="a t" style="left:397px;top:978.60px;font-family:'Liberation Sans',sans-serif;font-size:11.65px;line-height:11.65px;color:#000;">Dependencies</div>
<svg class="a" style="left:495px;top:977.5px;" width="14" height="14" viewBox="0 0 14 14"><path d="M0 2 L2 2 M4 2 L12 2 M0 6 L2 6 M4 6 L12 6 M0 10 L2 10 M4 10 L12 10" stroke="#6e6e6e" stroke-width="1.5"/></svg>
<div class="a t" style="left:511px;top:978.60px;font-family:'Liberation Sans',sans-serif;font-size:11.65px;line-height:11.65px;color:#000;">TODO</div>
<svg class="a" style="left:563.3px;top:977.5px;" width="14" height="14" viewBox="0 0 14 14"><path d="M7 1 L12.5 4 L12.5 10 L7 13 L1.5 10 L1.5 4 Z M7 1 L12.5 10 L1.5 10 Z" stroke="#6e6e6e" stroke-width="0.9" fill="none"/></svg>
<div class="a t" style="left:580px;top:978.60px;font-family:'Liberation Sans',sans-serif;font-size:11.65px;line-height:11.65px;color:#000;">GraphQL</div>
<svg class="a" style="left:649px;top:977.5px;" width="14" height="14" viewBox="0 0 14 14"><circle cx="6" cy="7" r="5.8" fill="#6e6e6e"/><rect x="5.2" y="3.5" width="1.6" height="4.5" fill="#f2f2f2"/><rect x="5.2" y="9" width="1.6" height="1.6" fill="#f2f2f2"/></svg>
<div class="a t" style="left:665px;top:978.60px;font-family:'Liberation Sans',sans-serif;font-size:11.65px;line-height:11.65px;color:#000;">Problems</div>
<svg class="a" style="left:735.4px;top:977.5px;" width="14" height="14" viewBox="0 0 14 14"><rect x="0" y="1" width="12" height="11" fill="#6e6e6e"/><path d="M2.5 4 L5 6.5 L2.5 9 M6 9.5 L9.5 9.5" stroke="#f2f2f2" stroke-width="1.1" fill="none"/></svg>
<div class="a t" style="left:752px;top:978.60px;font-family:'Liberation Sans',sans-serif;font-size:11.65px;line-height:11.65px;color:#000;">Terminal</div>
<svg class="a" style="left:817.5px;top:977.5px;" width="14" height="14" viewBox="0 0 14 14"><path d="M1 12 C2 4 8 2 13 1 C13 8 9 13 1 12 Z" fill="#6e6e6e"/></svg>
<div class="a t" style="left:834px;top:978.60px;font-family:'Liberation Sans',sans-serif;font-size:11.65px;line-height:11.65px;color:#000;">Spring</div>
<svg class="a" style="left:888.3px;top:977.5px;" width="14" height="14" viewBox="0 0 14 14"><path d="M6.5 1 L12 4 L12 10 L6.5 13 L1 10 L1 4 Z" fill="#6e6e6e"/><path d="M5 4.5 L9.5 7 L5 9.5 Z" fill="#f2f2f2"/></svg>
<div class="a t" style="left:905px;top:978.60px;font-family:'Liberation Sans',sans-serif;font-size:11.65px;line-height:11.65px;color:#000;">Services</div>
<svg class="a" style="left:970.4px;top:977.5px;" width="14" height="14" viewBox="0 0 14 14"><circle cx="7" cy="7" r="6" fill="none" stroke="#e05555" stroke-width="1.3"/><path d="M1.5 7 L4 5 L6 8 L8 5.5 L10 8 L12.5 6" stroke="#e05555" stroke-width="1" fill="none"/></svg>
<div class="a t" style="left:988px;top:978.60px;font-family:'Liberation Sans',sans-serif;font-size:11.65px;line-height:11.65px;color:#000;">SonarLint</div>
<div class="a t" style="left:25px;top:1000.80px;font-family:'Liberation Sans',sans-serif;font-size:12px;line-height:12px;color:#000;">Breakpoint reached (moments ago)</div>
<svg class="a" style="left:3px;top:999px;" width="12" height="6" viewBox="0 0 12 6"><rect x="0.5" y="0.5" width="10" height="10" fill="none" stroke="#6e6e6e"/></svg>
<div class="a t" style="left:1347px;top:1000.80px;font-family:'Liberation Sans',sans-serif;font-size:12px;line-height:12px;color:#000;">45:1  LF  UTF-8  4 spaces</div>
<div class="a t" style="left:1527px;top:1000.80px;font-family:'Liberation Sans',sans-serif;font-size:12px;line-height:12px;color:#000;">Yeongsang Jo*</div>
<svg class="a" style="left:1510px;top:998px;" width="12" height="6" viewBox="0 0 12 6"><circle cx="3" cy="2" r="1.8" fill="#6e6e6e"/><circle cx="8" cy="2" r="1.8" fill="#6e6e6e"/></svg>
<svg class="a" style="left:1622px;top:998px;" width="10" height="6" viewBox="0 0 10 6"><path d="M2 6 L2 3 A3 3 0 0 1 8 3 L8 6" stroke="#6e6e6e" stroke-width="1.3" fill="none"/></svg>
<div class="a" style="left:1654px;top:48px;width:1px;height:947px;background:#cfcfcf;"></div>
</body></html>
